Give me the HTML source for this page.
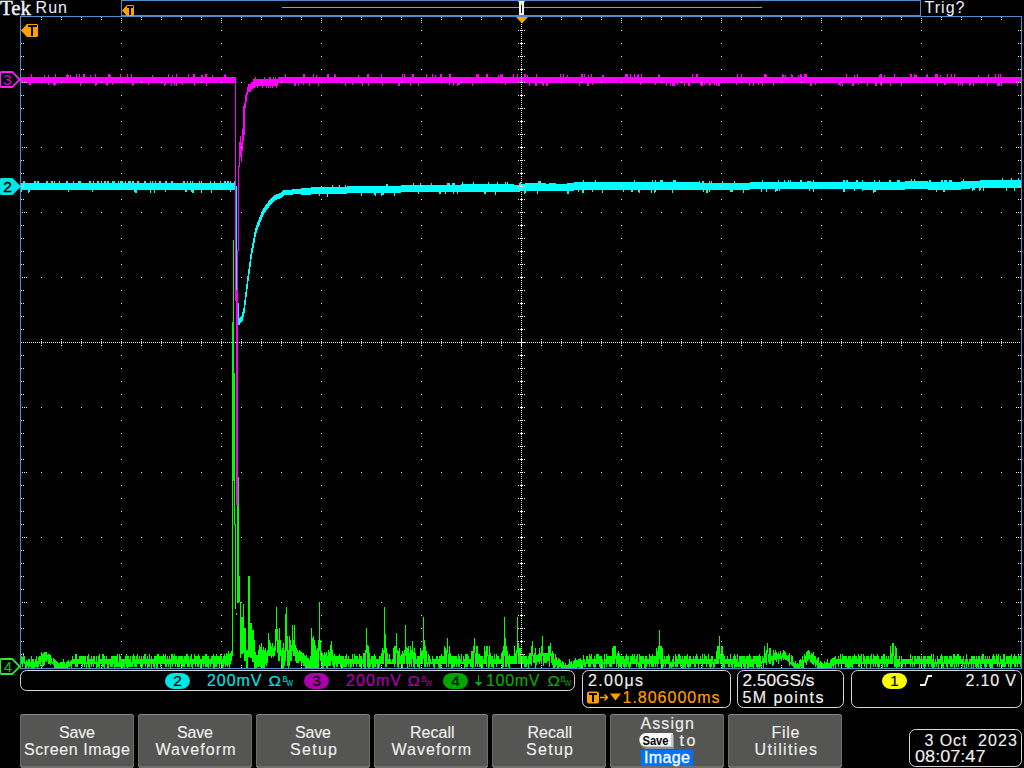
<!DOCTYPE html>
<html><head><meta charset="utf-8">
<style>
html,body{margin:0;padding:0;background:#000;width:1024px;height:768px;overflow:hidden}
svg{position:absolute;left:0;top:0}
text{font-family:"Liberation Sans",sans-serif}
.s{font-family:"Liberation Serif",serif}
</style></head><body>
<svg width="1024" height="768" viewBox="0 0 1024 768">
<rect width="1024" height="768" fill="#000"/>
<g shape-rendering="crispEdges">
<path fill="#508cc8" d="M121 0h800v1h-800zM121 0h1v16h-1zM920 0h1v16h-1zM121 15h800v1h-800z"/>
<rect x="282" y="7" width="480" height="1" fill="#00dcdc"/>
<path fill="#508cc8" d="M20 16h1002v1h-1002zM20 668h1002v1h-1002zM20 16h1v653h-1zM1021 16h1v653h-1z"/>
<path fill="#00ff00" d="M21 656h1v8h-1zM22 657h1v10h-1zM23 653h1v10h-1zM24 656h1v8h-1zM25 662h1v6h-1zM26 660h1v8h-1zM27 661h1v5h-1zM28 659h1v9h-1zM29 659h1v8h-1zM30 662h1v5h-1zM31 656h1v12h-1zM32 659h1v9h-1zM33 659h1v9h-1zM34 662h1v6h-1zM35 659h1v8h-1zM36 656h1v11h-1zM37 661h1v7h-1zM38 657h1v10h-1zM39 656h1v8h-1zM40 656h1v10h-1zM41 652h1v10h-1zM42 654h1v13h-1zM43 653h1v13h-1zM44 652h1v13h-1zM45 652h1v9h-1zM46 652h1v10h-1zM47 655h1v5h-1zM48 654h1v10h-1zM49 654h1v10h-1zM50 655h1v10h-1zM51 658h1v5h-1zM52 662h1v2h-1zM53 658h1v7h-1zM54 659h1v9h-1zM55 660h1v8h-1zM56 661h1v7h-1zM57 662h1v6h-1zM58 663h1v5h-1zM59 663h1v5h-1zM60 662h1v6h-1zM61 662h1v6h-1zM62 662h1v6h-1zM63 659h1v9h-1zM64 662h1v6h-1zM65 664h1v4h-1zM66 662h1v6h-1zM67 661h1v7h-1zM68 660h1v7h-1zM69 662h1v5h-1zM70 661h1v5h-1zM71 660h1v8h-1zM72 656h1v8h-1zM73 659h1v5h-1zM74 659h1v5h-1zM75 654h1v13h-1zM76 654h1v13h-1zM77 659h1v8h-1zM78 659h1v5h-1zM79 656h1v8h-1zM80 656h1v8h-1zM81 656h1v8h-1zM82 656h1v11h-1zM83 656h1v8h-1zM84 656h1v11h-1zM85 656h1v8h-1zM86 662h1v6h-1zM87 656h1v8h-1zM88 654h1v13h-1zM89 659h1v9h-1zM90 659h1v5h-1zM91 656h1v11h-1zM92 659h1v5h-1zM93 656h1v11h-1zM94 656h1v8h-1zM95 662h1v2h-1zM96 656h1v12h-1zM97 662h1v5h-1zM98 656h1v11h-1zM99 654h1v14h-1zM100 659h1v5h-1zM101 659h1v5h-1zM102 654h1v13h-1zM103 654h1v13h-1zM104 656h1v12h-1zM105 659h1v5h-1zM106 656h1v8h-1zM107 659h1v9h-1zM108 659h1v9h-1zM109 659h1v5h-1zM110 659h1v8h-1zM111 656h1v11h-1zM112 656h1v11h-1zM113 656h1v8h-1zM114 656h1v12h-1zM115 656h1v11h-1zM116 656h1v11h-1zM117 654h1v13h-1zM118 662h1v5h-1zM119 654h1v13h-1zM120 656h1v11h-1zM121 659h1v8h-1zM122 659h1v9h-1zM123 659h1v8h-1zM124 659h1v9h-1zM125 656h1v8h-1zM126 654h1v13h-1zM127 656h1v12h-1zM128 656h1v11h-1zM129 659h1v8h-1zM130 656h1v11h-1zM131 662h1v5h-1zM132 656h1v11h-1zM133 654h1v10h-1zM134 656h1v11h-1zM135 659h1v8h-1zM136 656h1v11h-1zM137 654h1v10h-1zM138 659h1v5h-1zM139 656h1v8h-1zM140 659h1v8h-1zM141 656h1v12h-1zM142 659h1v8h-1zM143 656h1v8h-1zM144 654h1v10h-1zM145 654h1v13h-1zM146 659h1v5h-1zM147 656h1v12h-1zM148 659h1v8h-1zM149 654h1v13h-1zM150 659h1v5h-1zM151 656h1v12h-1zM152 659h1v5h-1zM153 659h1v8h-1zM154 656h1v12h-1zM155 656h1v8h-1zM156 656h1v12h-1zM157 654h1v14h-1zM158 654h1v10h-1zM159 656h1v8h-1zM160 656h1v11h-1zM161 656h1v8h-1zM162 656h1v8h-1zM163 654h1v10h-1zM164 656h1v8h-1zM165 654h1v13h-1zM166 659h1v8h-1zM167 656h1v8h-1zM168 659h1v8h-1zM169 656h1v8h-1zM170 659h1v9h-1zM171 654h1v10h-1zM172 654h1v13h-1zM173 656h1v8h-1zM174 654h1v10h-1zM175 656h1v11h-1zM176 656h1v8h-1zM177 659h1v8h-1zM178 656h1v11h-1zM179 656h1v11h-1zM180 656h1v8h-1zM181 656h1v11h-1zM182 656h1v11h-1zM183 659h1v8h-1zM184 656h1v11h-1zM185 656h1v8h-1zM186 654h1v10h-1zM187 654h1v13h-1zM188 656h1v11h-1zM189 659h1v8h-1zM190 656h1v8h-1zM191 654h1v13h-1zM192 659h1v9h-1zM193 659h1v5h-1zM194 654h1v10h-1zM195 656h1v11h-1zM196 656h1v8h-1zM197 656h1v11h-1zM198 654h1v13h-1zM199 656h1v8h-1zM200 659h1v9h-1zM201 659h1v9h-1zM202 656h1v8h-1zM203 656h1v11h-1zM204 656h1v8h-1zM205 654h1v13h-1zM206 654h1v13h-1zM207 656h1v11h-1zM208 656h1v12h-1zM209 659h1v5h-1zM210 659h1v8h-1zM211 656h1v8h-1zM212 656h1v8h-1zM213 654h1v14h-1zM214 656h1v12h-1zM215 656h1v11h-1zM216 654h1v13h-1zM217 656h1v8h-1zM218 656h1v8h-1zM219 656h1v12h-1zM220 654h1v10h-1zM221 656h1v11h-1zM222 659h1v9h-1zM223 656h1v11h-1zM224 654h1v10h-1zM225 656h1v11h-1zM226 653h1v12h-1zM227 654h1v13h-1zM228 651h1v14h-1zM229 654h1v14h-1zM230 653h1v11h-1zM231 651h1v10h-1zM232 322h1v334h-1zM233 240h1v241h-1zM234 373h1v152h-1zM235 524h1v85h-1zM236 613h1v2h-1zM237 477h1v126h-1zM238 477h1v126h-1zM239 576h1v26h-1zM240 602h1v56h-1zM241 617h1v37h-1zM242 617h1v37h-1zM243 604h1v49h-1zM244 628h1v33h-1zM245 628h1v33h-1zM246 650h1v18h-1zM247 650h1v18h-1zM248 576h1v81h-1zM249 576h1v81h-1zM250 623h1v35h-1zM251 623h1v35h-1zM252 630h1v32h-1zM253 630h1v32h-1zM254 640h1v28h-1zM255 652h1v16h-1zM256 655h1v13h-1zM257 655h1v12h-1zM258 650h1v17h-1zM259 645h1v21h-1zM260 647h1v20h-1zM261 643h1v24h-1zM262 650h1v18h-1zM263 647h1v21h-1zM264 650h1v18h-1zM265 648h1v16h-1zM266 652h1v14h-1zM267 650h1v13h-1zM268 633h1v23h-1zM269 640h1v16h-1zM270 643h1v13h-1zM271 646h1v12h-1zM272 643h1v13h-1zM273 648h1v9h-1zM274 646h1v10h-1zM275 629h1v22h-1zM276 607h1v34h-1zM277 629h1v24h-1zM278 640h1v21h-1zM279 628h1v33h-1zM280 640h1v16h-1zM281 650h1v18h-1zM282 648h1v20h-1zM283 643h1v25h-1zM284 650h1v16h-1zM285 614h1v47h-1zM286 607h1v44h-1zM287 636h1v30h-1zM288 650h1v18h-1zM289 636h1v30h-1zM290 640h1v21h-1zM291 645h1v16h-1zM292 625h1v26h-1zM293 640h1v16h-1zM294 625h1v31h-1zM295 645h1v16h-1zM296 648h1v15h-1zM297 650h1v13h-1zM298 652h1v11h-1zM299 650h1v11h-1zM300 651h1v10h-1zM301 652h1v13h-1zM302 653h1v10h-1zM303 653h1v13h-1zM304 655h1v11h-1zM305 656h1v12h-1zM306 655h1v13h-1zM307 658h1v10h-1zM308 658h1v10h-1zM309 660h1v8h-1zM310 656h1v12h-1zM311 628h1v40h-1zM312 638h1v30h-1zM313 636h1v32h-1zM314 640h1v28h-1zM315 645h1v23h-1zM316 650h1v18h-1zM317 648h1v20h-1zM318 640h1v28h-1zM319 602h1v49h-1zM320 640h1v21h-1zM321 651h1v15h-1zM322 653h1v15h-1zM323 655h1v13h-1zM324 652h1v14h-1zM325 654h1v12h-1zM326 652h1v16h-1zM327 656h1v12h-1zM328 650h1v16h-1zM329 652h1v14h-1zM330 645h1v21h-1zM331 641h1v20h-1zM332 650h1v15h-1zM333 656h1v11h-1zM334 654h1v14h-1zM335 656h1v8h-1zM336 656h1v11h-1zM337 656h1v11h-1zM338 656h1v8h-1zM339 654h1v10h-1zM340 656h1v11h-1zM341 656h1v11h-1zM342 656h1v12h-1zM343 656h1v11h-1zM344 659h1v8h-1zM345 656h1v11h-1zM346 654h1v13h-1zM347 659h1v5h-1zM348 656h1v11h-1zM349 659h1v5h-1zM350 659h1v9h-1zM351 659h1v8h-1zM352 654h1v10h-1zM353 659h1v8h-1zM354 654h1v10h-1zM355 656h1v8h-1zM356 656h1v11h-1zM357 656h1v8h-1zM358 659h1v5h-1zM359 654h1v13h-1zM360 656h1v11h-1zM361 656h1v11h-1zM362 659h1v5h-1zM363 653h1v14h-1zM364 653h1v15h-1zM365 650h1v18h-1zM366 628h1v25h-1zM367 645h1v22h-1zM368 646h1v22h-1zM369 653h1v15h-1zM370 659h1v8h-1zM371 656h1v8h-1zM372 656h1v12h-1zM373 656h1v12h-1zM374 654h1v13h-1zM375 656h1v11h-1zM376 659h1v5h-1zM377 659h1v9h-1zM378 659h1v9h-1zM379 656h1v11h-1zM380 656h1v8h-1zM381 653h1v11h-1zM382 648h1v16h-1zM383 650h1v14h-1zM384 607h1v46h-1zM385 634h1v33h-1zM386 648h1v19h-1zM387 653h1v11h-1zM388 659h1v5h-1zM389 654h1v10h-1zM390 659h1v5h-1zM391 662h1v2h-1zM392 659h1v5h-1zM393 648h1v16h-1zM394 646h1v21h-1zM395 646h1v18h-1zM396 633h1v20h-1zM397 650h1v17h-1zM398 651h1v17h-1zM399 648h1v16h-1zM400 656h1v8h-1zM401 654h1v13h-1zM402 651h1v17h-1zM403 653h1v11h-1zM404 650h1v14h-1zM405 625h1v31h-1zM406 647h1v17h-1zM407 648h1v20h-1zM408 646h1v18h-1zM409 653h1v14h-1zM410 646h1v18h-1zM411 650h1v17h-1zM412 641h1v18h-1zM413 652h1v15h-1zM414 648h1v20h-1zM415 653h1v11h-1zM416 659h1v5h-1zM417 656h1v11h-1zM418 656h1v11h-1zM419 656h1v12h-1zM420 648h1v16h-1zM421 651h1v13h-1zM422 650h1v14h-1zM423 617h1v42h-1zM424 640h1v27h-1zM425 646h1v21h-1zM426 651h1v13h-1zM427 662h1v5h-1zM428 654h1v10h-1zM429 656h1v11h-1zM430 659h1v5h-1zM431 662h1v2h-1zM432 656h1v8h-1zM433 659h1v8h-1zM434 659h1v9h-1zM435 659h1v5h-1zM436 656h1v8h-1zM437 656h1v8h-1zM438 659h1v8h-1zM439 656h1v12h-1zM440 656h1v12h-1zM441 654h1v10h-1zM442 656h1v8h-1zM443 656h1v8h-1zM444 646h1v18h-1zM445 648h1v16h-1zM446 650h1v17h-1zM447 638h1v15h-1zM448 654h1v13h-1zM449 646h1v18h-1zM450 653h1v11h-1zM451 656h1v12h-1zM452 656h1v12h-1zM453 656h1v11h-1zM454 656h1v11h-1zM455 656h1v8h-1zM456 656h1v11h-1zM457 659h1v5h-1zM458 654h1v13h-1zM459 656h1v11h-1zM460 659h1v5h-1zM461 654h1v10h-1zM462 662h1v2h-1zM463 656h1v8h-1zM464 659h1v9h-1zM465 654h1v13h-1zM466 654h1v13h-1zM467 654h1v13h-1zM468 656h1v8h-1zM469 659h1v5h-1zM470 659h1v8h-1zM471 651h1v16h-1zM472 651h1v17h-1zM473 646h1v21h-1zM474 638h1v15h-1zM475 653h1v14h-1zM476 646h1v18h-1zM477 646h1v21h-1zM478 654h1v10h-1zM479 654h1v13h-1zM480 656h1v11h-1zM481 656h1v11h-1zM482 656h1v12h-1zM483 659h1v5h-1zM484 646h1v18h-1zM485 651h1v13h-1zM486 646h1v21h-1zM487 646h1v10h-1zM488 655h1v13h-1zM489 646h1v21h-1zM490 653h1v11h-1zM491 656h1v11h-1zM492 656h1v11h-1zM493 659h1v9h-1zM494 654h1v10h-1zM495 659h1v5h-1zM496 654h1v13h-1zM497 656h1v8h-1zM498 656h1v8h-1zM499 659h1v5h-1zM500 659h1v5h-1zM501 653h1v11h-1zM502 651h1v17h-1zM503 646h1v21h-1zM504 617h1v39h-1zM505 638h1v29h-1zM506 646h1v21h-1zM507 651h1v13h-1zM508 656h1v11h-1zM509 654h1v14h-1zM510 656h1v8h-1zM511 656h1v8h-1zM512 656h1v8h-1zM513 656h1v8h-1zM514 646h1v18h-1zM515 653h1v11h-1zM516 650h1v14h-1zM517 617h1v36h-1zM518 643h1v21h-1zM519 648h1v16h-1zM520 648h1v16h-1zM521 656h1v8h-1zM522 656h1v8h-1zM523 654h1v10h-1zM524 656h1v11h-1zM525 656h1v11h-1zM526 656h1v11h-1zM527 659h1v5h-1zM528 656h1v12h-1zM529 653h1v11h-1zM530 653h1v11h-1zM531 646h1v20h-1zM532 641h1v15h-1zM533 655h1v8h-1zM534 653h1v10h-1zM535 648h1v20h-1zM536 655h1v10h-1zM537 655h1v7h-1zM538 654h1v8h-1zM539 648h1v16h-1zM540 653h1v8h-1zM541 646h1v18h-1zM542 636h1v20h-1zM543 653h1v13h-1zM544 653h1v10h-1zM545 653h1v10h-1zM546 653h1v10h-1zM547 653h1v8h-1zM548 646h1v15h-1zM549 646h1v21h-1zM550 643h1v13h-1zM551 653h1v10h-1zM552 651h1v14h-1zM553 653h1v15h-1zM554 659h1v9h-1zM555 654h1v13h-1zM556 657h1v8h-1zM557 660h1v8h-1zM558 658h1v10h-1zM559 659h1v8h-1zM560 660h1v7h-1zM561 663h1v5h-1zM562 661h1v7h-1zM563 662h1v6h-1zM564 665h1v3h-1zM565 663h1v5h-1zM566 665h1v3h-1zM567 665h1v3h-1zM568 664h1v4h-1zM569 659h1v9h-1zM570 662h1v6h-1zM571 661h1v7h-1zM572 664h1v4h-1zM573 661h1v7h-1zM574 660h1v8h-1zM575 658h1v10h-1zM576 660h1v8h-1zM577 660h1v7h-1zM578 659h1v8h-1zM579 659h1v9h-1zM580 658h1v10h-1zM581 660h1v8h-1zM582 660h1v8h-1zM583 655h1v10h-1zM584 659h1v8h-1zM585 662h1v5h-1zM586 656h1v8h-1zM587 656h1v8h-1zM588 659h1v8h-1zM589 654h1v13h-1zM590 656h1v11h-1zM591 654h1v10h-1zM592 659h1v5h-1zM593 659h1v8h-1zM594 656h1v12h-1zM595 659h1v8h-1zM596 654h1v10h-1zM597 654h1v10h-1zM598 654h1v10h-1zM599 656h1v11h-1zM600 656h1v12h-1zM601 656h1v11h-1zM602 659h1v9h-1zM603 662h1v2h-1zM604 654h1v14h-1zM605 659h1v5h-1zM606 654h1v13h-1zM607 656h1v8h-1zM608 656h1v8h-1zM609 656h1v11h-1zM610 656h1v11h-1zM611 656h1v11h-1zM612 648h1v16h-1zM613 646h1v18h-1zM614 646h1v18h-1zM615 646h1v13h-1zM616 656h1v11h-1zM617 653h1v11h-1zM618 651h1v17h-1zM619 654h1v13h-1zM620 656h1v11h-1zM621 656h1v12h-1zM622 656h1v8h-1zM623 656h1v11h-1zM624 659h1v9h-1zM625 656h1v11h-1zM626 654h1v13h-1zM627 656h1v8h-1zM628 656h1v11h-1zM629 662h1v6h-1zM630 656h1v11h-1zM631 656h1v8h-1zM632 654h1v10h-1zM633 656h1v8h-1zM634 654h1v10h-1zM635 659h1v5h-1zM636 656h1v11h-1zM637 654h1v10h-1zM638 662h1v5h-1zM639 654h1v14h-1zM640 656h1v11h-1zM641 656h1v11h-1zM642 656h1v8h-1zM643 656h1v8h-1zM644 659h1v9h-1zM645 656h1v12h-1zM646 656h1v11h-1zM647 659h1v5h-1zM648 659h1v5h-1zM649 654h1v13h-1zM650 656h1v8h-1zM651 656h1v11h-1zM652 654h1v13h-1zM653 656h1v11h-1zM654 656h1v8h-1zM655 656h1v11h-1zM656 648h1v16h-1zM657 651h1v16h-1zM658 646h1v18h-1zM659 630h1v29h-1zM660 646h1v18h-1zM661 646h1v21h-1zM662 648h1v20h-1zM663 659h1v8h-1zM664 656h1v8h-1zM665 659h1v8h-1zM666 656h1v8h-1zM667 656h1v8h-1zM668 654h1v10h-1zM669 656h1v12h-1zM670 662h1v5h-1zM671 662h1v6h-1zM672 659h1v8h-1zM673 656h1v11h-1zM674 662h1v2h-1zM675 654h1v13h-1zM676 656h1v11h-1zM677 659h1v8h-1zM678 654h1v10h-1zM679 654h1v10h-1zM680 656h1v11h-1zM681 659h1v5h-1zM682 656h1v12h-1zM683 659h1v9h-1zM684 656h1v11h-1zM685 656h1v12h-1zM686 656h1v8h-1zM687 654h1v13h-1zM688 659h1v9h-1zM689 656h1v11h-1zM690 656h1v11h-1zM691 659h1v5h-1zM692 659h1v5h-1zM693 656h1v8h-1zM694 659h1v8h-1zM695 656h1v11h-1zM696 654h1v10h-1zM697 656h1v8h-1zM698 659h1v9h-1zM699 659h1v5h-1zM700 656h1v8h-1zM701 659h1v5h-1zM702 654h1v13h-1zM703 659h1v5h-1zM704 654h1v10h-1zM705 656h1v8h-1zM706 656h1v11h-1zM707 659h1v5h-1zM708 654h1v10h-1zM709 659h1v8h-1zM710 659h1v9h-1zM711 656h1v11h-1zM712 656h1v8h-1zM713 662h1v6h-1zM714 659h1v8h-1zM715 659h1v5h-1zM716 651h1v13h-1zM717 646h1v18h-1zM718 646h1v18h-1zM719 636h1v23h-1zM720 654h1v10h-1zM721 646h1v18h-1zM722 646h1v22h-1zM723 654h1v13h-1zM724 656h1v12h-1zM725 659h1v5h-1zM726 659h1v5h-1zM727 656h1v8h-1zM728 659h1v8h-1zM729 659h1v8h-1zM730 654h1v10h-1zM731 659h1v8h-1zM732 659h1v9h-1zM733 656h1v8h-1zM734 654h1v14h-1zM735 656h1v11h-1zM736 659h1v8h-1zM737 654h1v13h-1zM738 662h1v5h-1zM739 656h1v11h-1zM740 656h1v11h-1zM741 656h1v12h-1zM742 656h1v8h-1zM743 656h1v11h-1zM744 656h1v12h-1zM745 659h1v9h-1zM746 656h1v8h-1zM747 656h1v12h-1zM748 656h1v12h-1zM749 654h1v13h-1zM750 656h1v11h-1zM751 659h1v8h-1zM752 659h1v8h-1zM753 656h1v12h-1zM754 656h1v8h-1zM755 656h1v8h-1zM756 656h1v11h-1zM757 656h1v12h-1zM758 656h1v11h-1zM759 654h1v14h-1zM760 656h1v11h-1zM761 661h1v3h-1zM762 656h1v7h-1zM763 658h1v10h-1zM764 646h1v17h-1zM765 653h1v10h-1zM766 650h1v15h-1zM767 643h1v10h-1zM768 654h1v8h-1zM769 648h1v16h-1zM770 648h1v16h-1zM771 656h1v5h-1zM772 656h1v10h-1zM773 650h1v15h-1zM774 653h1v7h-1zM775 650h1v10h-1zM776 652h1v10h-1zM777 654h1v5h-1zM778 652h1v12h-1zM779 654h1v5h-1zM780 651h1v8h-1zM781 656h1v5h-1zM782 653h1v5h-1zM783 650h1v10h-1zM784 651h1v8h-1zM785 652h1v8h-1zM786 655h1v5h-1zM787 656h1v5h-1zM788 655h1v7h-1zM789 653h1v13h-1zM790 662h1v2h-1zM791 655h1v10h-1zM792 656h1v10h-1zM793 662h1v5h-1zM794 663h1v5h-1zM795 661h1v7h-1zM796 664h1v4h-1zM797 663h1v5h-1zM798 664h1v4h-1zM799 660h1v8h-1zM800 659h1v8h-1zM801 660h1v5h-1zM802 656h1v12h-1zM803 660h1v8h-1zM804 654h1v8h-1zM805 656h1v7h-1zM806 652h1v13h-1zM807 651h1v10h-1zM808 650h1v10h-1zM809 651h1v8h-1zM810 655h1v7h-1zM811 653h1v10h-1zM812 654h1v10h-1zM813 652h1v13h-1zM814 656h1v7h-1zM815 656h1v11h-1zM816 660h1v5h-1zM817 658h1v10h-1zM818 657h1v11h-1zM819 663h1v5h-1zM820 661h1v7h-1zM821 662h1v6h-1zM822 663h1v5h-1zM823 664h1v4h-1zM824 661h1v7h-1zM825 663h1v5h-1zM826 662h1v6h-1zM827 659h1v9h-1zM828 663h1v5h-1zM829 663h1v5h-1zM830 660h1v8h-1zM831 659h1v9h-1zM832 658h1v8h-1zM833 658h1v10h-1zM834 657h1v8h-1zM835 656h1v12h-1zM836 659h1v5h-1zM837 659h1v5h-1zM838 656h1v11h-1zM839 659h1v5h-1zM840 654h1v10h-1zM841 659h1v8h-1zM842 654h1v10h-1zM843 656h1v8h-1zM844 656h1v8h-1zM845 656h1v11h-1zM846 656h1v11h-1zM847 659h1v9h-1zM848 656h1v12h-1zM849 656h1v12h-1zM850 656h1v11h-1zM851 659h1v8h-1zM852 656h1v12h-1zM853 656h1v8h-1zM854 654h1v10h-1zM855 656h1v8h-1zM856 656h1v8h-1zM857 659h1v5h-1zM858 654h1v13h-1zM859 656h1v11h-1zM860 656h1v8h-1zM861 654h1v13h-1zM862 662h1v2h-1zM863 654h1v10h-1zM864 656h1v11h-1zM865 659h1v5h-1zM866 656h1v12h-1zM867 656h1v8h-1zM868 656h1v8h-1zM869 659h1v5h-1zM870 656h1v12h-1zM871 654h1v10h-1zM872 659h1v5h-1zM873 654h1v13h-1zM874 656h1v8h-1zM875 656h1v11h-1zM876 656h1v8h-1zM877 654h1v13h-1zM878 656h1v12h-1zM879 659h1v8h-1zM880 659h1v5h-1zM881 656h1v8h-1zM882 656h1v12h-1zM883 654h1v10h-1zM884 654h1v13h-1zM885 659h1v5h-1zM886 656h1v11h-1zM887 659h1v8h-1zM888 656h1v8h-1zM889 659h1v5h-1zM890 646h1v18h-1zM891 653h1v11h-1zM892 643h1v21h-1zM893 643h1v13h-1zM894 656h1v11h-1zM895 646h1v21h-1zM896 648h1v20h-1zM897 659h1v8h-1zM898 659h1v8h-1zM899 656h1v11h-1zM900 662h1v2h-1zM901 656h1v11h-1zM902 659h1v8h-1zM903 659h1v5h-1zM904 659h1v5h-1zM905 659h1v8h-1zM906 659h1v5h-1zM907 659h1v5h-1zM908 659h1v5h-1zM909 659h1v5h-1zM910 654h1v13h-1zM911 659h1v5h-1zM912 656h1v11h-1zM913 662h1v2h-1zM914 656h1v11h-1zM915 656h1v8h-1zM916 659h1v5h-1zM917 656h1v8h-1zM918 656h1v8h-1zM919 656h1v12h-1zM920 659h1v5h-1zM921 656h1v12h-1zM922 659h1v5h-1zM923 656h1v11h-1zM924 656h1v12h-1zM925 656h1v11h-1zM926 659h1v5h-1zM927 656h1v8h-1zM928 656h1v11h-1zM929 656h1v8h-1zM930 656h1v8h-1zM931 654h1v13h-1zM932 659h1v9h-1zM933 654h1v14h-1zM934 662h1v5h-1zM935 659h1v5h-1zM936 662h1v5h-1zM937 656h1v8h-1zM938 659h1v9h-1zM939 659h1v5h-1zM940 656h1v8h-1zM941 654h1v13h-1zM942 656h1v11h-1zM943 662h1v6h-1zM944 656h1v8h-1zM945 656h1v8h-1zM946 656h1v11h-1zM947 656h1v12h-1zM948 659h1v5h-1zM949 656h1v8h-1zM950 656h1v11h-1zM951 656h1v11h-1zM952 659h1v8h-1zM953 654h1v10h-1zM954 654h1v14h-1zM955 656h1v8h-1zM956 656h1v11h-1zM957 654h1v10h-1zM958 654h1v13h-1zM959 656h1v8h-1zM960 656h1v8h-1zM961 659h1v5h-1zM962 659h1v8h-1zM963 656h1v8h-1zM964 662h1v6h-1zM965 659h1v5h-1zM966 654h1v14h-1zM967 659h1v5h-1zM968 662h1v5h-1zM969 659h1v5h-1zM970 659h1v5h-1zM971 656h1v12h-1zM972 656h1v8h-1zM973 656h1v12h-1zM974 656h1v8h-1zM975 659h1v8h-1zM976 656h1v12h-1zM977 659h1v8h-1zM978 656h1v12h-1zM979 656h1v8h-1zM980 659h1v9h-1zM981 656h1v8h-1zM982 654h1v10h-1zM983 654h1v10h-1zM984 659h1v8h-1zM985 656h1v12h-1zM986 659h1v8h-1zM987 656h1v8h-1zM988 659h1v5h-1zM989 656h1v11h-1zM990 659h1v9h-1zM991 659h1v9h-1zM992 656h1v12h-1zM993 654h1v10h-1zM994 656h1v8h-1zM995 659h1v5h-1zM996 654h1v10h-1zM997 656h1v11h-1zM998 654h1v10h-1zM999 662h1v5h-1zM1000 656h1v8h-1zM1001 659h1v8h-1zM1002 659h1v8h-1zM1003 654h1v13h-1zM1004 654h1v13h-1zM1005 662h1v5h-1zM1006 656h1v8h-1zM1007 656h1v8h-1zM1008 656h1v11h-1zM1009 656h1v8h-1zM1010 656h1v12h-1zM1011 654h1v13h-1zM1012 659h1v5h-1zM1013 656h1v8h-1zM1014 654h1v13h-1zM1015 656h1v11h-1zM1016 656h1v8h-1zM1017 659h1v8h-1zM1018 654h1v10h-1zM1019 656h1v8h-1zM1020 656h1v11h-1z"/>
<path fill="#00ffff" d="M21 183h1v9h-1zM22 183h1v7h-1zM23 181h1v9h-1zM24 181h1v9h-1zM25 183h1v7h-1zM26 183h1v7h-1zM27 183h1v7h-1zM28 183h1v10h-1zM29 183h1v9h-1zM30 183h1v7h-1zM31 183h1v7h-1zM32 183h1v7h-1zM33 183h1v7h-1zM34 181h1v9h-1zM35 181h1v9h-1zM36 183h1v7h-1zM37 181h1v9h-1zM38 181h1v9h-1zM39 183h1v7h-1zM40 183h1v7h-1zM41 183h1v7h-1zM42 183h1v7h-1zM43 183h1v7h-1zM44 183h1v7h-1zM45 183h1v7h-1zM46 181h1v9h-1zM47 181h1v9h-1zM48 183h1v7h-1zM49 183h1v7h-1zM50 183h1v7h-1zM51 181h1v9h-1zM52 181h1v9h-1zM53 183h1v7h-1zM54 181h1v9h-1zM55 183h1v7h-1zM56 183h1v7h-1zM57 183h1v7h-1zM58 183h1v7h-1zM59 181h1v9h-1zM60 183h1v7h-1zM61 183h1v7h-1zM62 183h1v7h-1zM63 183h1v7h-1zM64 183h1v7h-1zM65 183h1v7h-1zM66 181h1v9h-1zM67 181h1v9h-1zM68 183h1v9h-1zM69 183h1v7h-1zM70 183h1v7h-1zM71 183h1v7h-1zM72 183h1v7h-1zM73 181h1v9h-1zM74 183h1v7h-1zM75 183h1v7h-1zM76 183h1v7h-1zM77 183h1v7h-1zM78 181h1v9h-1zM79 181h1v9h-1zM80 181h1v9h-1zM81 183h1v7h-1zM82 183h1v7h-1zM83 183h1v7h-1zM84 183h1v7h-1zM85 183h1v7h-1zM86 183h1v7h-1zM87 183h1v7h-1zM88 183h1v7h-1zM89 181h1v9h-1zM90 181h1v9h-1zM91 183h1v7h-1zM92 183h1v9h-1zM93 181h1v9h-1zM94 183h1v7h-1zM95 183h1v7h-1zM96 183h1v7h-1zM97 181h1v9h-1zM98 181h1v9h-1zM99 183h1v7h-1zM100 183h1v7h-1zM101 181h1v9h-1zM102 183h1v7h-1zM103 183h1v7h-1zM104 181h1v9h-1zM105 181h1v9h-1zM106 183h1v7h-1zM107 181h1v9h-1zM108 181h1v9h-1zM109 183h1v7h-1zM110 183h1v7h-1zM111 183h1v7h-1zM112 181h1v9h-1zM113 181h1v9h-1zM114 181h1v9h-1zM115 183h1v7h-1zM116 183h1v7h-1zM117 183h1v7h-1zM118 181h1v9h-1zM119 183h1v7h-1zM120 181h1v9h-1zM121 181h1v9h-1zM122 181h1v9h-1zM123 183h1v7h-1zM124 183h1v7h-1zM125 181h1v9h-1zM126 183h1v7h-1zM127 183h1v7h-1zM128 181h1v9h-1zM129 181h1v9h-1zM130 181h1v9h-1zM131 183h1v7h-1zM132 181h1v9h-1zM133 181h1v9h-1zM134 183h1v9h-1zM135 183h1v10h-1zM136 183h1v10h-1zM137 181h1v9h-1zM138 181h1v9h-1zM139 183h1v7h-1zM140 183h1v7h-1zM141 183h1v7h-1zM142 183h1v7h-1zM143 183h1v7h-1zM144 181h1v9h-1zM145 181h1v9h-1zM146 183h1v7h-1zM147 183h1v7h-1zM148 183h1v7h-1zM149 183h1v7h-1zM150 181h1v12h-1zM151 183h1v7h-1zM152 181h1v9h-1zM153 183h1v7h-1zM154 183h1v10h-1zM155 181h1v9h-1zM156 183h1v7h-1zM157 183h1v7h-1zM158 183h1v7h-1zM159 181h1v9h-1zM160 181h1v9h-1zM161 183h1v7h-1zM162 183h1v7h-1zM163 183h1v7h-1zM164 183h1v7h-1zM165 181h1v11h-1zM166 181h1v9h-1zM167 183h1v7h-1zM168 183h1v7h-1zM169 183h1v7h-1zM170 183h1v7h-1zM171 181h1v9h-1zM172 181h1v9h-1zM173 183h1v7h-1zM174 183h1v7h-1zM175 183h1v7h-1zM176 183h1v7h-1zM177 183h1v7h-1zM178 183h1v7h-1zM179 183h1v7h-1zM180 183h1v7h-1zM181 183h1v7h-1zM182 183h1v7h-1zM183 181h1v9h-1zM184 181h1v9h-1zM185 183h1v9h-1zM186 183h1v9h-1zM187 181h1v9h-1zM188 183h1v7h-1zM189 183h1v7h-1zM190 181h1v9h-1zM191 183h1v9h-1zM192 181h1v12h-1zM193 183h1v10h-1zM194 183h1v7h-1zM195 183h1v7h-1zM196 183h1v7h-1zM197 183h1v7h-1zM198 183h1v7h-1zM199 181h1v9h-1zM200 183h1v7h-1zM201 181h1v12h-1zM202 183h1v7h-1zM203 183h1v7h-1zM204 183h1v7h-1zM205 183h1v7h-1zM206 183h1v7h-1zM207 183h1v7h-1zM208 183h1v7h-1zM209 183h1v7h-1zM210 181h1v9h-1zM211 183h1v10h-1zM212 183h1v7h-1zM213 183h1v7h-1zM214 181h1v9h-1zM215 183h1v7h-1zM216 183h1v7h-1zM217 183h1v7h-1zM218 183h1v7h-1zM219 183h1v7h-1zM220 181h1v9h-1zM221 183h1v7h-1zM222 183h1v7h-1zM223 183h1v7h-1zM224 181h1v9h-1zM225 181h1v9h-1zM226 183h1v7h-1zM227 181h1v9h-1zM228 181h1v9h-1zM229 183h1v7h-1zM230 181h1v11h-1zM231 183h1v7h-1zM232 183h1v7h-1zM233 183h1v7h-1zM234 181h1v9h-1zM238 303h1v22h-1zM239 318h1v7h-1zM240 317h1v6h-1zM241 316h1v6h-1zM242 312h1v9h-1zM243 308h1v9h-1zM244 300h1v13h-1zM245 292h1v13h-1zM246 284h1v13h-1zM247 276h1v13h-1zM248 269h1v12h-1zM249 262h1v12h-1zM250 254h1v13h-1zM251 248h1v11h-1zM252 243h1v10h-1zM253 238h1v10h-1zM254 232h1v11h-1zM255 228h1v9h-1zM256 225h1v8h-1zM257 222h1v8h-1zM258 220h1v7h-1zM259 217h1v8h-1zM260 215h1v7h-1zM261 212h1v8h-1zM262 210h1v7h-1zM263 208h1v7h-1zM264 207h1v6h-1zM265 205h1v7h-1zM266 204h1v6h-1zM267 203h1v6h-1zM268 201h1v7h-1zM269 200h1v6h-1zM270 199h1v6h-1zM271 198h1v6h-1zM272 197h1v6h-1zM273 196h1v6h-1zM274 195h1v6h-1zM275 195h1v5h-1zM276 194h1v6h-1zM277 194h1v5h-1zM278 194h1v5h-1zM279 193h1v6h-1zM280 193h1v5h-1zM281 192h1v6h-1zM282 191h1v6h-1zM283 190h1v6h-1zM284 190h1v5h-1zM285 190h1v5h-1zM286 190h1v5h-1zM287 190h1v5h-1zM288 190h1v5h-1zM289 190h1v5h-1zM290 190h1v5h-1zM291 190h1v5h-1zM292 189h1v6h-1zM293 189h1v5h-1zM294 189h1v5h-1zM295 189h1v5h-1zM296 189h1v5h-1zM297 189h1v5h-1zM298 189h1v5h-1zM299 189h1v5h-1zM300 189h1v5h-1zM301 188h1v7h-1zM302 188h1v7h-1zM303 188h1v7h-1zM304 188h1v7h-1zM305 188h1v7h-1zM306 188h1v7h-1zM307 188h1v7h-1zM308 188h1v7h-1zM309 188h1v7h-1zM310 188h1v7h-1zM311 187h1v7h-1zM312 187h1v7h-1zM313 187h1v7h-1zM314 187h1v7h-1zM315 187h1v7h-1zM316 187h1v7h-1zM317 187h1v7h-1zM318 187h1v7h-1zM319 187h1v9h-1zM320 187h1v7h-1zM321 187h1v7h-1zM322 187h1v7h-1zM323 187h1v7h-1zM324 187h1v7h-1zM325 187h1v7h-1zM326 187h1v7h-1zM327 187h1v10h-1zM328 187h1v7h-1zM329 187h1v7h-1zM330 187h1v7h-1zM331 187h1v7h-1zM332 185h1v9h-1zM333 187h1v7h-1zM334 187h1v7h-1zM335 187h1v7h-1zM336 187h1v7h-1zM337 187h1v7h-1zM338 187h1v7h-1zM339 185h1v9h-1zM340 187h1v7h-1zM341 187h1v7h-1zM342 187h1v7h-1zM343 187h1v7h-1zM344 187h1v7h-1zM345 185h1v9h-1zM346 187h1v7h-1zM347 186h1v7h-1zM348 186h1v7h-1zM349 186h1v7h-1zM350 186h1v7h-1zM351 186h1v7h-1zM352 186h1v7h-1zM353 186h1v7h-1zM354 186h1v7h-1zM355 186h1v7h-1zM356 186h1v7h-1zM357 186h1v7h-1zM358 186h1v7h-1zM359 186h1v7h-1zM360 186h1v7h-1zM361 186h1v10h-1zM362 186h1v7h-1zM363 186h1v7h-1zM364 186h1v7h-1zM365 186h1v7h-1zM366 186h1v7h-1zM367 186h1v7h-1zM368 186h1v7h-1zM369 186h1v7h-1zM370 186h1v7h-1zM371 186h1v7h-1zM372 186h1v7h-1zM373 186h1v7h-1zM374 186h1v9h-1zM375 186h1v10h-1zM376 186h1v7h-1zM377 186h1v7h-1zM378 186h1v7h-1zM379 186h1v7h-1zM380 186h1v7h-1zM381 186h1v10h-1zM382 186h1v9h-1zM383 186h1v9h-1zM384 186h1v7h-1zM385 186h1v7h-1zM386 184h1v9h-1zM387 184h1v9h-1zM388 186h1v7h-1zM389 186h1v7h-1zM390 186h1v7h-1zM391 186h1v7h-1zM392 186h1v7h-1zM393 186h1v7h-1zM394 186h1v10h-1zM395 186h1v7h-1zM396 186h1v7h-1zM397 186h1v7h-1zM398 186h1v7h-1zM399 186h1v7h-1zM400 186h1v7h-1zM401 185h1v7h-1zM402 185h1v7h-1zM403 185h1v7h-1zM404 185h1v7h-1zM405 185h1v7h-1zM406 185h1v7h-1zM407 185h1v7h-1zM408 185h1v7h-1zM409 185h1v7h-1zM410 185h1v7h-1zM411 185h1v7h-1zM412 185h1v7h-1zM413 183h1v9h-1zM414 185h1v7h-1zM415 185h1v7h-1zM416 185h1v7h-1zM417 185h1v7h-1zM418 185h1v9h-1zM419 185h1v7h-1zM420 183h1v9h-1zM421 185h1v7h-1zM422 185h1v7h-1zM423 185h1v7h-1zM424 185h1v7h-1zM425 185h1v7h-1zM426 185h1v7h-1zM427 185h1v7h-1zM428 185h1v7h-1zM429 185h1v7h-1zM430 185h1v7h-1zM431 183h1v9h-1zM432 185h1v7h-1zM433 185h1v7h-1zM434 185h1v7h-1zM435 185h1v7h-1zM436 185h1v7h-1zM437 185h1v7h-1zM438 185h1v7h-1zM439 185h1v9h-1zM440 185h1v9h-1zM441 185h1v7h-1zM442 185h1v7h-1zM443 185h1v7h-1zM444 185h1v7h-1zM445 185h1v9h-1zM446 185h1v7h-1zM447 183h1v9h-1zM448 183h1v9h-1zM449 183h1v9h-1zM450 185h1v7h-1zM451 185h1v7h-1zM452 183h1v9h-1zM453 183h1v11h-1zM454 183h1v9h-1zM455 185h1v7h-1zM456 185h1v7h-1zM457 185h1v9h-1zM458 185h1v7h-1zM459 185h1v7h-1zM460 185h1v7h-1zM461 184h1v8h-1zM462 182h1v10h-1zM463 184h1v8h-1zM464 184h1v8h-1zM465 184h1v8h-1zM466 184h1v8h-1zM467 184h1v8h-1zM468 184h1v8h-1zM469 184h1v8h-1zM470 184h1v8h-1zM471 184h1v8h-1zM472 184h1v8h-1zM473 182h1v10h-1zM474 184h1v8h-1zM475 184h1v8h-1zM476 184h1v8h-1zM477 184h1v8h-1zM478 184h1v8h-1zM479 184h1v8h-1zM480 184h1v8h-1zM481 184h1v8h-1zM482 184h1v8h-1zM483 184h1v8h-1zM484 184h1v10h-1zM485 184h1v10h-1zM486 184h1v8h-1zM487 184h1v8h-1zM488 182h1v10h-1zM489 184h1v8h-1zM490 184h1v8h-1zM491 184h1v8h-1zM492 184h1v8h-1zM493 184h1v8h-1zM494 184h1v8h-1zM495 184h1v11h-1zM496 184h1v8h-1zM497 182h1v10h-1zM498 184h1v8h-1zM499 184h1v8h-1zM500 184h1v8h-1zM501 184h1v8h-1zM502 184h1v8h-1zM503 184h1v8h-1zM504 184h1v8h-1zM505 182h1v10h-1zM506 184h1v8h-1zM507 182h1v10h-1zM508 184h1v8h-1zM509 184h1v8h-1zM510 184h1v8h-1zM511 184h1v8h-1zM512 184h1v8h-1zM513 184h1v8h-1zM514 185h1v7h-1zM515 185h1v7h-1zM516 185h1v7h-1zM517 185h1v7h-1zM518 185h1v7h-1zM519 183h1v9h-1zM520 182h1v9h-1zM521 184h1v7h-1zM522 184h1v7h-1zM523 184h1v7h-1zM524 184h1v10h-1zM525 183h1v10h-1zM526 183h1v8h-1zM527 183h1v8h-1zM528 183h1v8h-1zM529 183h1v8h-1zM530 183h1v8h-1zM531 183h1v8h-1zM532 183h1v8h-1zM533 183h1v8h-1zM534 183h1v8h-1zM535 183h1v8h-1zM536 183h1v8h-1zM537 183h1v11h-1zM538 181h1v10h-1zM539 181h1v10h-1zM540 181h1v10h-1zM541 183h1v8h-1zM542 183h1v8h-1zM543 183h1v8h-1zM544 183h1v8h-1zM545 183h1v8h-1zM546 184h1v7h-1zM547 184h1v7h-1zM548 184h1v7h-1zM549 183h1v8h-1zM550 183h1v8h-1zM551 183h1v8h-1zM552 183h1v8h-1zM553 183h1v8h-1zM554 183h1v8h-1zM555 183h1v8h-1zM556 184h1v7h-1zM557 184h1v7h-1zM558 184h1v7h-1zM559 184h1v7h-1zM560 184h1v7h-1zM561 184h1v7h-1zM562 184h1v7h-1zM563 184h1v7h-1zM564 184h1v7h-1zM565 184h1v7h-1zM566 184h1v7h-1zM567 183h1v11h-1zM568 183h1v11h-1zM569 183h1v8h-1zM570 183h1v8h-1zM571 183h1v8h-1zM572 183h1v8h-1zM573 183h1v8h-1zM574 182h1v8h-1zM575 182h1v8h-1zM576 182h1v8h-1zM577 182h1v8h-1zM578 182h1v10h-1zM579 182h1v8h-1zM580 182h1v8h-1zM581 182h1v8h-1zM582 182h1v11h-1zM583 180h1v13h-1zM584 182h1v8h-1zM585 182h1v8h-1zM586 182h1v8h-1zM587 182h1v8h-1zM588 182h1v8h-1zM589 182h1v8h-1zM590 182h1v8h-1zM591 182h1v8h-1zM592 182h1v10h-1zM593 182h1v8h-1zM594 182h1v8h-1zM595 180h1v10h-1zM596 182h1v8h-1zM597 182h1v8h-1zM598 182h1v8h-1zM599 182h1v8h-1zM600 182h1v8h-1zM601 182h1v8h-1zM602 182h1v11h-1zM603 182h1v8h-1zM604 182h1v8h-1zM605 182h1v8h-1zM606 182h1v8h-1zM607 182h1v8h-1zM608 182h1v8h-1zM609 182h1v8h-1zM610 182h1v8h-1zM611 182h1v8h-1zM612 182h1v8h-1zM613 182h1v8h-1zM614 182h1v8h-1zM615 182h1v8h-1zM616 182h1v8h-1zM617 182h1v8h-1zM618 182h1v8h-1zM619 182h1v8h-1zM620 182h1v8h-1zM621 182h1v8h-1zM622 182h1v8h-1zM623 182h1v10h-1zM624 182h1v8h-1zM625 182h1v8h-1zM626 182h1v8h-1zM627 182h1v8h-1zM628 182h1v8h-1zM629 182h1v8h-1zM630 182h1v8h-1zM631 182h1v10h-1zM632 182h1v10h-1zM633 182h1v8h-1zM634 180h1v10h-1zM635 182h1v8h-1zM636 182h1v8h-1zM637 182h1v8h-1zM638 182h1v10h-1zM639 182h1v11h-1zM640 182h1v8h-1zM641 182h1v8h-1zM642 182h1v8h-1zM643 182h1v8h-1zM644 182h1v8h-1zM645 182h1v8h-1zM646 182h1v8h-1zM647 182h1v8h-1zM648 182h1v8h-1zM649 182h1v8h-1zM650 182h1v8h-1zM651 182h1v11h-1zM652 180h1v10h-1zM653 182h1v8h-1zM654 182h1v11h-1zM655 180h1v12h-1zM656 182h1v8h-1zM657 182h1v8h-1zM658 182h1v8h-1zM659 182h1v8h-1zM660 180h1v10h-1zM661 180h1v10h-1zM662 180h1v10h-1zM663 182h1v8h-1zM664 182h1v8h-1zM665 182h1v8h-1zM666 182h1v8h-1zM667 182h1v8h-1zM668 182h1v8h-1zM669 182h1v8h-1zM670 182h1v8h-1zM671 182h1v8h-1zM672 182h1v11h-1zM673 180h1v10h-1zM674 180h1v10h-1zM675 180h1v10h-1zM676 182h1v8h-1zM677 182h1v8h-1zM678 182h1v8h-1zM679 182h1v8h-1zM680 182h1v8h-1zM681 182h1v8h-1zM682 182h1v8h-1zM683 182h1v8h-1zM684 182h1v8h-1zM685 182h1v8h-1zM686 182h1v8h-1zM687 182h1v8h-1zM688 182h1v8h-1zM689 182h1v8h-1zM690 182h1v8h-1zM691 182h1v8h-1zM692 182h1v8h-1zM693 182h1v8h-1zM694 182h1v8h-1zM695 182h1v8h-1zM696 182h1v8h-1zM697 182h1v8h-1zM698 182h1v8h-1zM699 181h1v9h-1zM700 183h1v7h-1zM701 183h1v7h-1zM702 181h1v9h-1zM703 181h1v11h-1zM704 183h1v7h-1zM705 183h1v7h-1zM706 183h1v10h-1zM707 183h1v10h-1zM708 183h1v7h-1zM709 181h1v11h-1zM710 183h1v7h-1zM711 181h1v9h-1zM712 183h1v7h-1zM713 183h1v7h-1zM714 183h1v7h-1zM715 183h1v7h-1zM716 183h1v7h-1zM717 183h1v7h-1zM718 183h1v7h-1zM719 183h1v7h-1zM720 183h1v7h-1zM721 183h1v7h-1zM722 181h1v9h-1zM723 183h1v7h-1zM724 183h1v7h-1zM725 183h1v7h-1zM726 183h1v7h-1zM727 183h1v7h-1zM728 183h1v7h-1zM729 183h1v7h-1zM730 183h1v9h-1zM731 183h1v9h-1zM732 183h1v9h-1zM733 183h1v7h-1zM734 181h1v9h-1zM735 183h1v7h-1zM736 183h1v7h-1zM737 183h1v7h-1zM738 183h1v7h-1zM739 183h1v7h-1zM740 183h1v7h-1zM741 183h1v7h-1zM742 183h1v7h-1zM743 183h1v10h-1zM744 183h1v7h-1zM745 183h1v7h-1zM746 183h1v7h-1zM747 183h1v7h-1zM748 183h1v7h-1zM749 183h1v7h-1zM750 182h1v7h-1zM751 182h1v7h-1zM752 182h1v7h-1zM753 182h1v7h-1zM754 182h1v7h-1zM755 182h1v7h-1zM756 182h1v7h-1zM757 182h1v7h-1zM758 182h1v7h-1zM759 182h1v7h-1zM760 182h1v7h-1zM761 182h1v10h-1zM762 180h1v9h-1zM763 182h1v7h-1zM764 182h1v7h-1zM765 182h1v7h-1zM766 182h1v10h-1zM767 182h1v7h-1zM768 182h1v7h-1zM769 182h1v7h-1zM770 182h1v7h-1zM771 182h1v7h-1zM772 182h1v7h-1zM773 182h1v7h-1zM774 182h1v7h-1zM775 182h1v10h-1zM776 182h1v9h-1zM777 182h1v9h-1zM778 180h1v9h-1zM779 182h1v9h-1zM780 182h1v7h-1zM781 182h1v7h-1zM782 182h1v7h-1zM783 182h1v7h-1zM784 180h1v9h-1zM785 182h1v7h-1zM786 182h1v7h-1zM787 182h1v7h-1zM788 180h1v9h-1zM789 182h1v7h-1zM790 180h1v9h-1zM791 182h1v7h-1zM792 182h1v7h-1zM793 182h1v7h-1zM794 182h1v7h-1zM795 182h1v7h-1zM796 182h1v7h-1zM797 182h1v7h-1zM798 182h1v7h-1zM799 182h1v7h-1zM800 180h1v9h-1zM801 180h1v9h-1zM802 182h1v7h-1zM803 182h1v7h-1zM804 182h1v7h-1zM805 182h1v7h-1zM806 182h1v7h-1zM807 181h1v8h-1zM808 181h1v8h-1zM809 181h1v10h-1zM810 181h1v8h-1zM811 182h1v7h-1zM812 182h1v7h-1zM813 180h1v12h-1zM814 182h1v7h-1zM815 182h1v7h-1zM816 182h1v7h-1zM817 182h1v7h-1zM818 182h1v7h-1zM819 182h1v7h-1zM820 182h1v7h-1zM821 182h1v7h-1zM822 182h1v7h-1zM823 182h1v7h-1zM824 182h1v7h-1zM825 182h1v7h-1zM826 182h1v7h-1zM827 182h1v7h-1zM828 182h1v7h-1zM829 182h1v7h-1zM830 182h1v7h-1zM831 182h1v7h-1zM832 182h1v7h-1zM833 182h1v7h-1zM834 182h1v7h-1zM835 182h1v7h-1zM836 182h1v7h-1zM837 182h1v7h-1zM838 182h1v7h-1zM839 182h1v7h-1zM840 182h1v7h-1zM841 182h1v7h-1zM842 182h1v7h-1zM843 180h1v12h-1zM844 180h1v12h-1zM845 182h1v7h-1zM846 180h1v9h-1zM847 180h1v9h-1zM848 182h1v7h-1zM849 182h1v7h-1zM850 182h1v7h-1zM851 182h1v7h-1zM852 182h1v7h-1zM853 182h1v7h-1zM854 182h1v9h-1zM855 182h1v7h-1zM856 180h1v9h-1zM857 180h1v9h-1zM858 182h1v7h-1zM859 182h1v7h-1zM860 182h1v7h-1zM861 182h1v7h-1zM862 180h1v11h-1zM863 182h1v8h-1zM864 182h1v8h-1zM865 182h1v8h-1zM866 182h1v8h-1zM867 182h1v8h-1zM868 182h1v8h-1zM869 182h1v8h-1zM870 182h1v8h-1zM871 182h1v8h-1zM872 182h1v8h-1zM873 182h1v11h-1zM874 180h1v12h-1zM875 182h1v10h-1zM876 182h1v8h-1zM877 182h1v8h-1zM878 182h1v8h-1zM879 180h1v10h-1zM880 182h1v8h-1zM881 182h1v8h-1zM882 182h1v8h-1zM883 182h1v8h-1zM884 182h1v8h-1zM885 182h1v8h-1zM886 182h1v8h-1zM887 182h1v8h-1zM888 182h1v8h-1zM889 180h1v10h-1zM890 180h1v10h-1zM891 182h1v8h-1zM892 182h1v8h-1zM893 182h1v8h-1zM894 182h1v8h-1zM895 182h1v8h-1zM896 182h1v8h-1zM897 180h1v10h-1zM898 180h1v10h-1zM899 180h1v10h-1zM900 182h1v8h-1zM901 182h1v8h-1zM902 182h1v8h-1zM903 182h1v8h-1zM904 182h1v8h-1zM905 181h1v8h-1zM906 181h1v8h-1zM907 181h1v8h-1zM908 181h1v8h-1zM909 181h1v8h-1zM910 181h1v8h-1zM911 179h1v10h-1zM912 181h1v8h-1zM913 181h1v8h-1zM914 179h1v10h-1zM915 181h1v8h-1zM916 181h1v8h-1zM917 181h1v8h-1zM918 181h1v8h-1zM919 181h1v8h-1zM920 181h1v8h-1zM921 181h1v8h-1zM922 181h1v8h-1zM923 181h1v8h-1zM924 181h1v8h-1zM925 181h1v8h-1zM926 181h1v8h-1zM927 181h1v8h-1zM928 182h1v8h-1zM929 180h1v10h-1zM930 180h1v10h-1zM931 182h1v8h-1zM932 182h1v8h-1zM933 182h1v8h-1zM934 182h1v8h-1zM935 182h1v8h-1zM936 182h1v10h-1zM937 182h1v8h-1zM938 182h1v8h-1zM939 182h1v8h-1zM940 182h1v8h-1zM941 180h1v10h-1zM942 180h1v10h-1zM943 182h1v10h-1zM944 180h1v12h-1zM945 180h1v10h-1zM946 180h1v10h-1zM947 182h1v8h-1zM948 182h1v8h-1zM949 180h1v10h-1zM950 180h1v10h-1zM951 180h1v10h-1zM952 182h1v8h-1zM953 182h1v8h-1zM954 182h1v8h-1zM955 182h1v8h-1zM956 182h1v8h-1zM957 182h1v8h-1zM958 182h1v8h-1zM959 182h1v8h-1zM960 182h1v8h-1zM961 181h1v8h-1zM962 181h1v8h-1zM963 179h1v10h-1zM964 181h1v8h-1zM965 181h1v8h-1zM966 181h1v8h-1zM967 181h1v8h-1zM968 181h1v8h-1zM969 181h1v8h-1zM970 181h1v7h-1zM971 181h1v7h-1zM972 181h1v10h-1zM973 181h1v9h-1zM974 181h1v9h-1zM975 181h1v7h-1zM976 181h1v7h-1zM977 181h1v7h-1zM978 181h1v7h-1zM979 181h1v10h-1zM980 180h1v10h-1zM981 180h1v8h-1zM982 180h1v8h-1zM983 180h1v11h-1zM984 180h1v8h-1zM985 180h1v8h-1zM986 180h1v8h-1zM987 180h1v8h-1zM988 180h1v8h-1zM989 180h1v8h-1zM990 180h1v8h-1zM991 180h1v8h-1zM992 180h1v8h-1zM993 180h1v8h-1zM994 180h1v8h-1zM995 180h1v8h-1zM996 180h1v8h-1zM997 180h1v8h-1zM998 180h1v8h-1zM999 180h1v8h-1zM1000 180h1v8h-1zM1001 180h1v8h-1zM1002 178h1v10h-1zM1003 180h1v8h-1zM1004 180h1v8h-1zM1005 180h1v8h-1zM1006 180h1v11h-1zM1007 180h1v8h-1zM1008 180h1v8h-1zM1009 180h1v8h-1zM1010 180h1v8h-1zM1011 178h1v10h-1zM1012 180h1v8h-1zM1013 180h1v8h-1zM1014 180h1v11h-1zM1015 180h1v8h-1zM1016 180h1v8h-1zM1017 180h1v8h-1zM1018 178h1v10h-1zM1019 180h1v8h-1zM1020 180h1v8h-1zM235 183h1v118h-1zM236 186h1v132h-1zM237 300h1v25h-1z"/>
<path fill="#ff00ff" d="M21 77h1v6h-1zM22 77h1v6h-1zM23 77h1v6h-1zM24 77h1v6h-1zM25 77h1v6h-1zM26 77h1v6h-1zM27 77h1v6h-1zM28 77h1v6h-1zM29 77h1v8h-1zM30 77h1v8h-1zM31 74h1v9h-1zM32 77h1v6h-1zM33 77h1v6h-1zM34 77h1v6h-1zM35 77h1v6h-1zM36 77h1v6h-1zM37 77h1v6h-1zM38 77h1v6h-1zM39 77h1v6h-1zM40 77h1v6h-1zM41 77h1v6h-1zM42 77h1v6h-1zM43 77h1v6h-1zM44 75h1v8h-1zM45 77h1v6h-1zM46 77h1v6h-1zM47 77h1v6h-1zM48 75h1v10h-1zM49 77h1v6h-1zM50 77h1v6h-1zM51 77h1v6h-1zM52 77h1v6h-1zM53 77h1v8h-1zM54 77h1v9h-1zM55 74h1v11h-1zM56 77h1v6h-1zM57 77h1v6h-1zM58 77h1v6h-1zM59 77h1v6h-1zM60 77h1v6h-1zM61 77h1v6h-1zM62 77h1v6h-1zM63 77h1v6h-1zM64 77h1v6h-1zM65 77h1v6h-1zM66 75h1v8h-1zM67 74h1v9h-1zM68 75h1v8h-1zM69 77h1v6h-1zM70 75h1v8h-1zM71 77h1v6h-1zM72 77h1v6h-1zM73 77h1v6h-1zM74 77h1v6h-1zM75 77h1v6h-1zM76 74h1v9h-1zM77 77h1v6h-1zM78 77h1v6h-1zM79 74h1v9h-1zM80 77h1v9h-1zM81 77h1v6h-1zM82 77h1v6h-1zM83 74h1v9h-1zM84 74h1v9h-1zM85 77h1v6h-1zM86 77h1v6h-1zM87 77h1v6h-1zM88 77h1v6h-1zM89 77h1v6h-1zM90 75h1v8h-1zM91 77h1v6h-1zM92 77h1v6h-1zM93 77h1v6h-1zM94 77h1v6h-1zM95 74h1v12h-1zM96 77h1v8h-1zM97 77h1v6h-1zM98 77h1v6h-1zM99 77h1v6h-1zM100 77h1v6h-1zM101 77h1v6h-1zM102 77h1v6h-1zM103 77h1v6h-1zM104 77h1v6h-1zM105 77h1v6h-1zM106 77h1v8h-1zM107 77h1v9h-1zM108 74h1v9h-1zM109 74h1v9h-1zM110 75h1v8h-1zM111 77h1v6h-1zM112 77h1v8h-1zM113 77h1v6h-1zM114 77h1v6h-1zM115 77h1v6h-1zM116 77h1v6h-1zM117 77h1v6h-1zM118 77h1v6h-1zM119 77h1v6h-1zM120 74h1v9h-1zM121 77h1v6h-1zM122 77h1v6h-1zM123 77h1v6h-1zM124 77h1v6h-1zM125 77h1v6h-1zM126 77h1v6h-1zM127 74h1v9h-1zM128 77h1v6h-1zM129 77h1v6h-1zM130 77h1v6h-1zM131 74h1v9h-1zM132 77h1v9h-1zM133 77h1v8h-1zM134 77h1v6h-1zM135 77h1v6h-1zM136 77h1v6h-1zM137 77h1v6h-1zM138 77h1v6h-1zM139 77h1v6h-1zM140 77h1v6h-1zM141 77h1v6h-1zM142 77h1v6h-1zM143 77h1v6h-1zM144 77h1v6h-1zM145 77h1v6h-1zM146 77h1v6h-1zM147 77h1v6h-1zM148 77h1v8h-1zM149 77h1v6h-1zM150 77h1v6h-1zM151 77h1v6h-1zM152 75h1v8h-1zM153 77h1v6h-1zM154 77h1v6h-1zM155 77h1v6h-1zM156 77h1v6h-1zM157 77h1v6h-1zM158 77h1v6h-1zM159 77h1v6h-1zM160 77h1v6h-1zM161 77h1v6h-1zM162 77h1v6h-1zM163 77h1v6h-1zM164 77h1v9h-1zM165 77h1v8h-1zM166 77h1v6h-1zM167 77h1v6h-1zM168 74h1v9h-1zM169 77h1v6h-1zM170 77h1v6h-1zM171 77h1v9h-1zM172 75h1v8h-1zM173 77h1v6h-1zM174 77h1v9h-1zM175 77h1v6h-1zM176 74h1v12h-1zM177 77h1v6h-1zM178 77h1v6h-1zM179 77h1v6h-1zM180 77h1v6h-1zM181 77h1v6h-1zM182 77h1v8h-1zM183 77h1v6h-1zM184 77h1v6h-1zM185 77h1v6h-1zM186 77h1v6h-1zM187 77h1v6h-1zM188 74h1v9h-1zM189 77h1v6h-1zM190 77h1v6h-1zM191 77h1v6h-1zM192 77h1v6h-1zM193 74h1v9h-1zM194 74h1v12h-1zM195 77h1v6h-1zM196 77h1v6h-1zM197 77h1v6h-1zM198 77h1v6h-1zM199 77h1v6h-1zM200 77h1v6h-1zM201 75h1v8h-1zM202 75h1v8h-1zM203 77h1v6h-1zM204 77h1v6h-1zM205 74h1v9h-1zM206 74h1v12h-1zM207 77h1v6h-1zM208 77h1v6h-1zM209 77h1v6h-1zM210 77h1v6h-1zM211 77h1v6h-1zM212 75h1v8h-1zM213 77h1v6h-1zM214 77h1v6h-1zM215 77h1v6h-1zM216 77h1v6h-1zM217 77h1v6h-1zM218 77h1v6h-1zM219 77h1v6h-1zM220 77h1v6h-1zM221 77h1v6h-1zM222 77h1v6h-1zM223 77h1v6h-1zM224 75h1v8h-1zM225 74h1v9h-1zM226 77h1v6h-1zM227 77h1v6h-1zM228 77h1v6h-1zM229 77h1v6h-1zM230 77h1v6h-1zM231 77h1v6h-1zM232 77h1v6h-1zM233 77h1v6h-1zM234 77h1v6h-1zM278 77h1v6h-1zM279 77h1v6h-1zM280 77h1v6h-1zM281 77h1v6h-1zM282 77h1v6h-1zM283 77h1v6h-1zM284 77h1v6h-1zM285 74h1v9h-1zM286 77h1v6h-1zM287 77h1v6h-1zM288 77h1v6h-1zM289 77h1v6h-1zM290 77h1v6h-1zM291 77h1v6h-1zM292 77h1v6h-1zM293 77h1v6h-1zM294 77h1v9h-1zM295 77h1v9h-1zM296 77h1v6h-1zM297 77h1v6h-1zM298 77h1v9h-1zM299 77h1v6h-1zM300 77h1v6h-1zM301 77h1v6h-1zM302 77h1v6h-1zM303 74h1v11h-1zM304 74h1v9h-1zM305 77h1v6h-1zM306 77h1v6h-1zM307 77h1v6h-1zM308 77h1v6h-1zM309 77h1v9h-1zM310 77h1v6h-1zM311 77h1v6h-1zM312 77h1v6h-1zM313 74h1v9h-1zM314 77h1v6h-1zM315 77h1v6h-1zM316 75h1v8h-1zM317 77h1v6h-1zM318 77h1v9h-1zM319 77h1v6h-1zM320 77h1v6h-1zM321 77h1v6h-1zM322 77h1v6h-1zM323 77h1v6h-1zM324 77h1v6h-1zM325 77h1v6h-1zM326 77h1v6h-1zM327 74h1v9h-1zM328 74h1v9h-1zM329 77h1v6h-1zM330 77h1v6h-1zM331 77h1v6h-1zM332 77h1v6h-1zM333 77h1v6h-1zM334 74h1v9h-1zM335 75h1v8h-1zM336 77h1v6h-1zM337 77h1v6h-1zM338 77h1v6h-1zM339 77h1v6h-1zM340 77h1v6h-1zM341 77h1v6h-1zM342 77h1v6h-1zM343 77h1v6h-1zM344 77h1v6h-1zM345 77h1v9h-1zM346 77h1v6h-1zM347 77h1v6h-1zM348 77h1v6h-1zM349 77h1v6h-1zM350 77h1v6h-1zM351 77h1v6h-1zM352 77h1v8h-1zM353 77h1v6h-1zM354 77h1v6h-1zM355 77h1v6h-1zM356 77h1v6h-1zM357 77h1v6h-1zM358 75h1v8h-1zM359 77h1v6h-1zM360 77h1v6h-1zM361 77h1v6h-1zM362 77h1v9h-1zM363 77h1v6h-1zM364 77h1v6h-1zM365 77h1v6h-1zM366 77h1v6h-1zM367 74h1v9h-1zM368 74h1v12h-1zM369 77h1v6h-1zM370 77h1v6h-1zM371 77h1v6h-1zM372 77h1v6h-1zM373 77h1v6h-1zM374 77h1v6h-1zM375 77h1v6h-1zM376 77h1v6h-1zM377 77h1v6h-1zM378 77h1v6h-1zM379 77h1v6h-1zM380 77h1v6h-1zM381 74h1v9h-1zM382 77h1v9h-1zM383 77h1v6h-1zM384 77h1v6h-1zM385 77h1v6h-1zM386 77h1v6h-1zM387 77h1v6h-1zM388 77h1v6h-1zM389 77h1v6h-1zM390 77h1v6h-1zM391 77h1v6h-1zM392 77h1v6h-1zM393 77h1v6h-1zM394 77h1v6h-1zM395 77h1v6h-1zM396 77h1v6h-1zM397 77h1v6h-1zM398 77h1v9h-1zM399 77h1v9h-1zM400 77h1v6h-1zM401 77h1v6h-1zM402 74h1v9h-1zM403 77h1v6h-1zM404 74h1v9h-1zM405 77h1v6h-1zM406 77h1v6h-1zM407 77h1v6h-1zM408 77h1v6h-1zM409 77h1v6h-1zM410 77h1v9h-1zM411 77h1v6h-1zM412 74h1v9h-1zM413 74h1v9h-1zM414 77h1v6h-1zM415 77h1v6h-1zM416 77h1v6h-1zM417 77h1v6h-1zM418 77h1v9h-1zM419 77h1v6h-1zM420 77h1v6h-1zM421 77h1v6h-1zM422 77h1v6h-1zM423 77h1v6h-1zM424 77h1v6h-1zM425 77h1v6h-1zM426 74h1v9h-1zM427 77h1v6h-1zM428 77h1v6h-1zM429 77h1v6h-1zM430 77h1v6h-1zM431 77h1v6h-1zM432 74h1v9h-1zM433 77h1v6h-1zM434 77h1v6h-1zM435 75h1v8h-1zM436 77h1v6h-1zM437 77h1v6h-1zM438 77h1v6h-1zM439 77h1v6h-1zM440 74h1v9h-1zM441 74h1v9h-1zM442 77h1v6h-1zM443 77h1v6h-1zM444 77h1v6h-1zM445 77h1v6h-1zM446 77h1v6h-1zM447 77h1v6h-1zM448 77h1v6h-1zM449 74h1v11h-1zM450 74h1v9h-1zM451 77h1v6h-1zM452 77h1v6h-1zM453 77h1v9h-1zM454 77h1v6h-1zM455 77h1v6h-1zM456 77h1v6h-1zM457 77h1v9h-1zM458 77h1v8h-1zM459 77h1v8h-1zM460 77h1v6h-1zM461 77h1v6h-1zM462 77h1v6h-1zM463 77h1v6h-1zM464 77h1v6h-1zM465 77h1v6h-1zM466 77h1v6h-1zM467 77h1v6h-1zM468 77h1v6h-1zM469 77h1v6h-1zM470 77h1v6h-1zM471 77h1v6h-1zM472 77h1v9h-1zM473 77h1v6h-1zM474 77h1v6h-1zM475 77h1v6h-1zM476 74h1v9h-1zM477 75h1v8h-1zM478 74h1v9h-1zM479 77h1v6h-1zM480 77h1v6h-1zM481 77h1v6h-1zM482 77h1v6h-1zM483 77h1v6h-1zM484 77h1v6h-1zM485 77h1v6h-1zM486 74h1v9h-1zM487 74h1v9h-1zM488 77h1v6h-1zM489 77h1v6h-1zM490 77h1v6h-1zM491 77h1v6h-1zM492 77h1v6h-1zM493 77h1v6h-1zM494 77h1v6h-1zM495 77h1v6h-1zM496 77h1v6h-1zM497 77h1v6h-1zM498 75h1v8h-1zM499 77h1v6h-1zM500 74h1v9h-1zM501 75h1v8h-1zM502 74h1v9h-1zM503 77h1v6h-1zM504 77h1v6h-1zM505 77h1v8h-1zM506 77h1v6h-1zM507 77h1v6h-1zM508 77h1v6h-1zM509 77h1v6h-1zM510 77h1v6h-1zM511 77h1v6h-1zM512 77h1v6h-1zM513 74h1v9h-1zM514 77h1v6h-1zM515 77h1v6h-1zM516 77h1v6h-1zM517 74h1v9h-1zM518 77h1v6h-1zM519 77h1v6h-1zM520 77h1v6h-1zM521 77h1v6h-1zM522 77h1v6h-1zM523 77h1v6h-1zM524 74h1v9h-1zM525 74h1v9h-1zM526 77h1v6h-1zM527 75h1v8h-1zM528 77h1v6h-1zM529 77h1v9h-1zM530 77h1v6h-1zM531 77h1v6h-1zM532 77h1v6h-1zM533 77h1v6h-1zM534 77h1v6h-1zM535 77h1v9h-1zM536 74h1v12h-1zM537 77h1v6h-1zM538 77h1v6h-1zM539 77h1v6h-1zM540 77h1v6h-1zM541 77h1v6h-1zM542 77h1v8h-1zM543 77h1v9h-1zM544 77h1v6h-1zM545 77h1v6h-1zM546 77h1v9h-1zM547 77h1v9h-1zM548 77h1v6h-1zM549 77h1v6h-1zM550 77h1v6h-1zM551 77h1v6h-1zM552 77h1v6h-1zM553 77h1v6h-1zM554 77h1v6h-1zM555 77h1v6h-1zM556 77h1v6h-1zM557 77h1v6h-1zM558 77h1v6h-1zM559 77h1v6h-1zM560 74h1v9h-1zM561 77h1v6h-1zM562 77h1v6h-1zM563 74h1v9h-1zM564 77h1v6h-1zM565 77h1v6h-1zM566 77h1v6h-1zM567 75h1v8h-1zM568 77h1v6h-1zM569 77h1v6h-1zM570 77h1v6h-1zM571 77h1v6h-1zM572 77h1v6h-1zM573 77h1v6h-1zM574 77h1v6h-1zM575 77h1v6h-1zM576 77h1v6h-1zM577 77h1v6h-1zM578 77h1v6h-1zM579 77h1v9h-1zM580 77h1v6h-1zM581 74h1v9h-1zM582 74h1v9h-1zM583 77h1v6h-1zM584 74h1v9h-1zM585 77h1v6h-1zM586 77h1v6h-1zM587 77h1v9h-1zM588 75h1v11h-1zM589 77h1v6h-1zM590 77h1v6h-1zM591 74h1v9h-1zM592 77h1v8h-1zM593 77h1v6h-1zM594 77h1v6h-1zM595 77h1v6h-1zM596 77h1v6h-1zM597 77h1v6h-1zM598 77h1v6h-1zM599 77h1v6h-1zM600 77h1v6h-1zM601 77h1v6h-1zM602 75h1v8h-1zM603 75h1v8h-1zM604 77h1v6h-1zM605 77h1v6h-1zM606 77h1v6h-1zM607 77h1v6h-1zM608 77h1v6h-1zM609 77h1v6h-1zM610 77h1v6h-1zM611 77h1v6h-1zM612 77h1v6h-1zM613 77h1v6h-1zM614 77h1v6h-1zM615 77h1v6h-1zM616 77h1v6h-1zM617 77h1v6h-1zM618 77h1v6h-1zM619 77h1v6h-1zM620 77h1v6h-1zM621 77h1v6h-1zM622 77h1v6h-1zM623 77h1v6h-1zM624 77h1v6h-1zM625 74h1v9h-1zM626 74h1v9h-1zM627 74h1v9h-1zM628 77h1v6h-1zM629 77h1v6h-1zM630 74h1v9h-1zM631 77h1v6h-1zM632 77h1v6h-1zM633 77h1v6h-1zM634 74h1v9h-1zM635 77h1v6h-1zM636 77h1v6h-1zM637 75h1v8h-1zM638 74h1v9h-1zM639 77h1v6h-1zM640 77h1v8h-1zM641 74h1v9h-1zM642 77h1v6h-1zM643 77h1v6h-1zM644 77h1v6h-1zM645 77h1v6h-1zM646 77h1v6h-1zM647 77h1v6h-1zM648 77h1v6h-1zM649 77h1v6h-1zM650 77h1v6h-1zM651 77h1v6h-1zM652 77h1v6h-1zM653 77h1v6h-1zM654 77h1v6h-1zM655 77h1v8h-1zM656 77h1v6h-1zM657 77h1v6h-1zM658 74h1v9h-1zM659 75h1v8h-1zM660 77h1v6h-1zM661 77h1v6h-1zM662 77h1v6h-1zM663 77h1v6h-1zM664 77h1v6h-1zM665 77h1v6h-1zM666 77h1v9h-1zM667 77h1v6h-1zM668 77h1v6h-1zM669 77h1v6h-1zM670 77h1v9h-1zM671 77h1v6h-1zM672 77h1v9h-1zM673 77h1v9h-1zM674 77h1v9h-1zM675 77h1v6h-1zM676 77h1v6h-1zM677 77h1v8h-1zM678 77h1v6h-1zM679 77h1v6h-1zM680 77h1v6h-1zM681 77h1v6h-1zM682 77h1v6h-1zM683 77h1v6h-1zM684 77h1v9h-1zM685 77h1v6h-1zM686 77h1v6h-1zM687 77h1v6h-1zM688 77h1v9h-1zM689 77h1v9h-1zM690 77h1v6h-1zM691 77h1v6h-1zM692 74h1v9h-1zM693 77h1v6h-1zM694 77h1v6h-1zM695 77h1v6h-1zM696 74h1v9h-1zM697 74h1v9h-1zM698 77h1v6h-1zM699 77h1v6h-1zM700 77h1v8h-1zM701 77h1v9h-1zM702 77h1v9h-1zM703 77h1v6h-1zM704 77h1v8h-1zM705 77h1v6h-1zM706 77h1v6h-1zM707 77h1v6h-1zM708 77h1v6h-1zM709 77h1v9h-1zM710 77h1v8h-1zM711 77h1v6h-1zM712 77h1v6h-1zM713 77h1v6h-1zM714 77h1v8h-1zM715 77h1v6h-1zM716 77h1v9h-1zM717 77h1v6h-1zM718 77h1v9h-1zM719 77h1v9h-1zM720 77h1v6h-1zM721 77h1v6h-1zM722 77h1v6h-1zM723 77h1v6h-1zM724 77h1v6h-1zM725 77h1v6h-1zM726 77h1v6h-1zM727 77h1v6h-1zM728 77h1v6h-1zM729 77h1v6h-1zM730 77h1v6h-1zM731 77h1v6h-1zM732 77h1v6h-1zM733 77h1v6h-1zM734 77h1v6h-1zM735 77h1v6h-1zM736 77h1v8h-1zM737 74h1v9h-1zM738 77h1v6h-1zM739 77h1v6h-1zM740 77h1v6h-1zM741 74h1v9h-1zM742 77h1v6h-1zM743 77h1v6h-1zM744 77h1v6h-1zM745 77h1v6h-1zM746 77h1v6h-1zM747 77h1v6h-1zM748 77h1v6h-1zM749 77h1v9h-1zM750 77h1v6h-1zM751 77h1v6h-1zM752 77h1v6h-1zM753 77h1v9h-1zM754 77h1v6h-1zM755 77h1v6h-1zM756 77h1v6h-1zM757 77h1v6h-1zM758 77h1v8h-1zM759 77h1v6h-1zM760 77h1v6h-1zM761 77h1v6h-1zM762 77h1v9h-1zM763 77h1v6h-1zM764 74h1v9h-1zM765 74h1v9h-1zM766 75h1v8h-1zM767 77h1v6h-1zM768 77h1v6h-1zM769 77h1v6h-1zM770 77h1v6h-1zM771 77h1v6h-1zM772 77h1v6h-1zM773 77h1v9h-1zM774 77h1v6h-1zM775 77h1v6h-1zM776 77h1v6h-1zM777 77h1v6h-1zM778 77h1v6h-1zM779 77h1v6h-1zM780 77h1v6h-1zM781 77h1v6h-1zM782 74h1v9h-1zM783 75h1v8h-1zM784 77h1v6h-1zM785 75h1v8h-1zM786 77h1v6h-1zM787 77h1v6h-1zM788 77h1v6h-1zM789 77h1v6h-1zM790 77h1v6h-1zM791 74h1v9h-1zM792 75h1v8h-1zM793 77h1v6h-1zM794 77h1v6h-1zM795 77h1v6h-1zM796 77h1v6h-1zM797 77h1v6h-1zM798 75h1v8h-1zM799 77h1v6h-1zM800 74h1v9h-1zM801 75h1v8h-1zM802 77h1v6h-1zM803 77h1v6h-1zM804 74h1v9h-1zM805 74h1v9h-1zM806 74h1v9h-1zM807 77h1v6h-1zM808 77h1v6h-1zM809 77h1v6h-1zM810 77h1v9h-1zM811 77h1v9h-1zM812 77h1v6h-1zM813 77h1v6h-1zM814 77h1v6h-1zM815 77h1v8h-1zM816 77h1v6h-1zM817 77h1v6h-1zM818 77h1v6h-1zM819 77h1v6h-1zM820 77h1v6h-1zM821 77h1v6h-1zM822 77h1v6h-1zM823 77h1v6h-1zM824 77h1v6h-1zM825 77h1v6h-1zM826 77h1v6h-1zM827 77h1v6h-1zM828 77h1v6h-1zM829 77h1v6h-1zM830 77h1v6h-1zM831 77h1v6h-1zM832 77h1v6h-1zM833 77h1v6h-1zM834 77h1v6h-1zM835 77h1v6h-1zM836 77h1v6h-1zM837 77h1v6h-1zM838 77h1v8h-1zM839 77h1v8h-1zM840 77h1v9h-1zM841 77h1v6h-1zM842 77h1v9h-1zM843 77h1v6h-1zM844 77h1v6h-1zM845 77h1v6h-1zM846 74h1v9h-1zM847 77h1v6h-1zM848 77h1v6h-1zM849 77h1v6h-1zM850 77h1v6h-1zM851 77h1v6h-1zM852 77h1v9h-1zM853 77h1v9h-1zM854 75h1v8h-1zM855 77h1v6h-1zM856 77h1v6h-1zM857 74h1v9h-1zM858 77h1v8h-1zM859 77h1v6h-1zM860 77h1v6h-1zM861 77h1v6h-1zM862 77h1v6h-1zM863 77h1v6h-1zM864 77h1v6h-1zM865 77h1v6h-1zM866 77h1v6h-1zM867 77h1v9h-1zM868 77h1v6h-1zM869 77h1v6h-1zM870 77h1v6h-1zM871 77h1v6h-1zM872 77h1v6h-1zM873 77h1v6h-1zM874 77h1v6h-1zM875 77h1v9h-1zM876 77h1v9h-1zM877 77h1v6h-1zM878 77h1v6h-1zM879 75h1v8h-1zM880 74h1v11h-1zM881 74h1v12h-1zM882 77h1v6h-1zM883 77h1v6h-1zM884 75h1v8h-1zM885 77h1v6h-1zM886 77h1v6h-1zM887 77h1v6h-1zM888 77h1v6h-1zM889 77h1v6h-1zM890 77h1v9h-1zM891 77h1v6h-1zM892 77h1v6h-1zM893 77h1v6h-1zM894 74h1v9h-1zM895 77h1v6h-1zM896 77h1v6h-1zM897 77h1v6h-1zM898 77h1v6h-1zM899 77h1v6h-1zM900 77h1v6h-1zM901 77h1v9h-1zM902 77h1v6h-1zM903 77h1v6h-1zM904 77h1v6h-1zM905 77h1v6h-1zM906 77h1v6h-1zM907 77h1v6h-1zM908 77h1v6h-1zM909 77h1v6h-1zM910 74h1v9h-1zM911 74h1v9h-1zM912 77h1v6h-1zM913 77h1v6h-1zM914 74h1v9h-1zM915 75h1v8h-1zM916 75h1v8h-1zM917 77h1v6h-1zM918 77h1v6h-1zM919 77h1v6h-1zM920 77h1v6h-1zM921 77h1v6h-1zM922 77h1v6h-1zM923 77h1v6h-1zM924 77h1v6h-1zM925 77h1v6h-1zM926 75h1v8h-1zM927 74h1v9h-1zM928 77h1v6h-1zM929 77h1v6h-1zM930 77h1v6h-1zM931 77h1v6h-1zM932 77h1v6h-1zM933 77h1v6h-1zM934 77h1v6h-1zM935 74h1v9h-1zM936 74h1v9h-1zM937 74h1v12h-1zM938 77h1v6h-1zM939 77h1v6h-1zM940 75h1v8h-1zM941 77h1v6h-1zM942 77h1v6h-1zM943 77h1v6h-1zM944 77h1v8h-1zM945 77h1v8h-1zM946 77h1v6h-1zM947 74h1v9h-1zM948 77h1v6h-1zM949 77h1v6h-1zM950 77h1v6h-1zM951 74h1v9h-1zM952 77h1v6h-1zM953 77h1v6h-1zM954 74h1v9h-1zM955 77h1v6h-1zM956 77h1v6h-1zM957 77h1v6h-1zM958 77h1v9h-1zM959 77h1v6h-1zM960 77h1v8h-1zM961 77h1v6h-1zM962 77h1v9h-1zM963 77h1v6h-1zM964 77h1v6h-1zM965 77h1v6h-1zM966 77h1v6h-1zM967 77h1v6h-1zM968 77h1v6h-1zM969 77h1v9h-1zM970 77h1v8h-1zM971 77h1v6h-1zM972 77h1v6h-1zM973 77h1v9h-1zM974 77h1v6h-1zM975 77h1v6h-1zM976 77h1v6h-1zM977 77h1v6h-1zM978 75h1v8h-1zM979 77h1v6h-1zM980 77h1v6h-1zM981 77h1v6h-1zM982 77h1v6h-1zM983 77h1v6h-1zM984 77h1v6h-1zM985 77h1v6h-1zM986 77h1v6h-1zM987 77h1v9h-1zM988 74h1v9h-1zM989 77h1v6h-1zM990 77h1v6h-1zM991 77h1v6h-1zM992 77h1v6h-1zM993 77h1v6h-1zM994 77h1v6h-1zM995 74h1v9h-1zM996 77h1v6h-1zM997 77h1v9h-1zM998 74h1v12h-1zM999 77h1v9h-1zM1000 74h1v9h-1zM1001 77h1v9h-1zM1002 77h1v6h-1zM1003 77h1v6h-1zM1004 77h1v6h-1zM1005 77h1v6h-1zM1006 77h1v6h-1zM1007 77h1v6h-1zM1008 77h1v6h-1zM1009 77h1v6h-1zM1010 77h1v6h-1zM1011 77h1v6h-1zM1012 77h1v6h-1zM1013 77h1v6h-1zM1014 77h1v6h-1zM1015 77h1v6h-1zM1016 77h1v6h-1zM1017 77h1v9h-1zM1018 77h1v6h-1zM1019 77h1v6h-1zM1020 77h1v6h-1zM235 77h1v224h-1zM236 290h1v215h-1zM237 250h1v255h-1zM238 166h1v85h-1zM239 142h1v25h-1zM240 136h1v21h-1zM241 142h1v20h-1zM242 129h1v22h-1zM243 106h1v35h-1zM244 103h1v32h-1zM245 95h1v13h-1zM246 92h1v10h-1zM247 87h1v8h-1zM248 84h1v8h-1zM249 84h1v8h-1zM250 84h1v8h-1zM251 82h1v8h-1zM252 82h1v7h-1zM253 79h1v9h-1zM254 79h1v9h-1zM255 77h1v10h-1zM256 79h1v7h-1zM257 79h1v9h-1zM258 79h1v7h-1zM259 79h1v7h-1zM260 79h1v7h-1zM261 79h1v7h-1zM262 79h1v9h-1zM263 79h1v7h-1zM264 77h1v9h-1zM265 79h1v7h-1zM266 79h1v9h-1zM267 79h1v7h-1zM268 79h1v9h-1zM269 77h1v9h-1zM270 77h1v11h-1zM271 79h1v7h-1zM272 79h1v9h-1zM273 77h1v9h-1zM274 79h1v7h-1zM275 77h1v9h-1zM276 79h1v9h-1zM277 79h1v7h-1z"/>
<path fill="#f2f2f2" d="M21 30h1v1h-1zM21 43h1v1h-1zM21 56h1v1h-1zM21 69h1v1h-1zM21 95h1v1h-1zM21 108h1v1h-1zM21 121h1v1h-1zM21 134h1v1h-1zM21 160h1v1h-1zM21 173h1v1h-1zM21 186h1v1h-1zM21 199h1v1h-1zM21 225h1v1h-1zM21 238h1v1h-1zM21 251h1v1h-1zM21 264h1v1h-1zM21 290h1v1h-1zM21 303h1v1h-1zM21 316h1v1h-1zM21 329h1v1h-1zM21 342h1v1h-1zM21 355h1v1h-1zM21 368h1v1h-1zM21 381h1v1h-1zM21 394h1v1h-1zM21 420h1v1h-1zM21 433h1v1h-1zM21 446h1v1h-1zM21 459h1v1h-1zM21 485h1v1h-1zM21 498h1v1h-1zM21 511h1v1h-1zM21 524h1v1h-1zM21 550h1v1h-1zM21 563h1v1h-1zM21 576h1v1h-1zM21 589h1v1h-1zM21 615h1v1h-1zM21 628h1v1h-1zM21 641h1v1h-1zM21 654h1v1h-1zM22 82h1v1h-1zM22 147h1v1h-1zM22 212h1v1h-1zM22 277h1v1h-1zM22 407h1v1h-1zM22 472h1v1h-1zM22 537h1v1h-1zM22 602h1v1h-1zM23 30h1v1h-1zM23 43h1v1h-1zM23 56h1v1h-1zM23 69h1v1h-1zM23 95h1v1h-1zM23 108h1v1h-1zM23 121h1v1h-1zM23 134h1v1h-1zM23 160h1v1h-1zM23 173h1v1h-1zM23 186h1v1h-1zM23 199h1v1h-1zM23 225h1v1h-1zM23 238h1v1h-1zM23 251h1v1h-1zM23 264h1v1h-1zM23 290h1v1h-1zM23 303h1v1h-1zM23 316h1v1h-1zM23 329h1v1h-1zM23 342h1v1h-1zM23 355h1v1h-1zM23 368h1v1h-1zM23 381h1v1h-1zM23 394h1v1h-1zM23 420h1v1h-1zM23 433h1v1h-1zM23 446h1v1h-1zM23 459h1v1h-1zM23 485h1v1h-1zM23 498h1v1h-1zM23 511h1v1h-1zM23 524h1v1h-1zM23 550h1v1h-1zM23 563h1v1h-1zM23 576h1v1h-1zM23 589h1v1h-1zM23 615h1v1h-1zM23 628h1v1h-1zM23 641h1v1h-1zM23 654h1v1h-1zM24 82h1v1h-1zM24 147h1v1h-1zM24 212h1v1h-1zM24 277h1v1h-1zM24 407h1v1h-1zM24 472h1v1h-1zM24 537h1v1h-1zM24 602h1v1h-1zM25 342h1v1h-1zM26 82h1v1h-1zM26 147h1v1h-1zM26 212h1v1h-1zM26 277h1v1h-1zM26 407h1v1h-1zM26 472h1v1h-1zM26 537h1v1h-1zM26 602h1v1h-1zM27 342h1v1h-1zM29 342h1v1h-1zM31 342h1v1h-1zM33 342h1v1h-1zM35 342h1v1h-1zM37 342h1v1h-1zM39 342h1v1h-1zM41 17h1v1h-1zM41 19h1v1h-1zM41 82h1v1h-1zM41 147h1v1h-1zM41 212h1v1h-1zM41 277h1v1h-1zM41 339h1v1h-1zM41 341h1v1h-1zM41 342h1v1h-1zM41 343h1v1h-1zM41 345h1v1h-1zM41 407h1v1h-1zM41 472h1v1h-1zM41 537h1v1h-1zM41 602h1v1h-1zM41 665h1v1h-1zM41 667h1v1h-1zM43 342h1v1h-1zM45 342h1v1h-1zM47 342h1v1h-1zM49 342h1v1h-1zM51 342h1v1h-1zM53 342h1v1h-1zM55 342h1v1h-1zM57 342h1v1h-1zM59 342h1v1h-1zM61 17h1v1h-1zM61 19h1v1h-1zM61 82h1v1h-1zM61 147h1v1h-1zM61 212h1v1h-1zM61 277h1v1h-1zM61 339h1v1h-1zM61 341h1v1h-1zM61 342h1v1h-1zM61 343h1v1h-1zM61 345h1v1h-1zM61 407h1v1h-1zM61 472h1v1h-1zM61 537h1v1h-1zM61 602h1v1h-1zM61 665h1v1h-1zM61 667h1v1h-1zM63 342h1v1h-1zM65 342h1v1h-1zM67 342h1v1h-1zM69 342h1v1h-1zM71 342h1v1h-1zM73 342h1v1h-1zM75 342h1v1h-1zM77 342h1v1h-1zM79 342h1v1h-1zM81 17h1v1h-1zM81 19h1v1h-1zM81 82h1v1h-1zM81 147h1v1h-1zM81 212h1v1h-1zM81 277h1v1h-1zM81 339h1v1h-1zM81 341h1v1h-1zM81 342h1v1h-1zM81 343h1v1h-1zM81 345h1v1h-1zM81 407h1v1h-1zM81 472h1v1h-1zM81 537h1v1h-1zM81 602h1v1h-1zM81 665h1v1h-1zM81 667h1v1h-1zM83 342h1v1h-1zM85 342h1v1h-1zM87 342h1v1h-1zM89 342h1v1h-1zM91 342h1v1h-1zM93 342h1v1h-1zM95 342h1v1h-1zM97 342h1v1h-1zM99 342h1v1h-1zM101 17h1v1h-1zM101 19h1v1h-1zM101 82h1v1h-1zM101 147h1v1h-1zM101 212h1v1h-1zM101 277h1v1h-1zM101 339h1v1h-1zM101 341h1v1h-1zM101 342h1v1h-1zM101 343h1v1h-1zM101 345h1v1h-1zM101 407h1v1h-1zM101 472h1v1h-1zM101 537h1v1h-1zM101 602h1v1h-1zM101 665h1v1h-1zM101 667h1v1h-1zM103 342h1v1h-1zM105 342h1v1h-1zM107 342h1v1h-1zM109 342h1v1h-1zM111 342h1v1h-1zM113 342h1v1h-1zM115 342h1v1h-1zM117 342h1v1h-1zM119 342h1v1h-1zM121 18h1v1h-1zM121 20h1v1h-1zM121 22h1v1h-1zM121 30h1v1h-1zM121 43h1v1h-1zM121 56h1v1h-1zM121 69h1v1h-1zM121 82h1v1h-1zM121 95h1v1h-1zM121 108h1v1h-1zM121 121h1v1h-1zM121 134h1v1h-1zM121 147h1v1h-1zM121 160h1v1h-1zM121 173h1v1h-1zM121 186h1v1h-1zM121 199h1v1h-1zM121 212h1v1h-1zM121 225h1v1h-1zM121 238h1v1h-1zM121 251h1v1h-1zM121 264h1v1h-1zM121 277h1v1h-1zM121 290h1v1h-1zM121 303h1v1h-1zM121 316h1v1h-1zM121 329h1v1h-1zM121 339h1v1h-1zM121 341h1v1h-1zM121 342h1v1h-1zM121 343h1v1h-1zM121 345h1v1h-1zM121 355h1v1h-1zM121 368h1v1h-1zM121 381h1v1h-1zM121 394h1v1h-1zM121 407h1v1h-1zM121 420h1v1h-1zM121 433h1v1h-1zM121 446h1v1h-1zM121 459h1v1h-1zM121 472h1v1h-1zM121 485h1v1h-1zM121 498h1v1h-1zM121 511h1v1h-1zM121 524h1v1h-1zM121 537h1v1h-1zM121 550h1v1h-1zM121 563h1v1h-1zM121 576h1v1h-1zM121 589h1v1h-1zM121 602h1v1h-1zM121 615h1v1h-1zM121 628h1v1h-1zM121 641h1v1h-1zM121 654h1v1h-1zM121 663h1v1h-1zM121 665h1v1h-1zM121 667h1v1h-1zM123 342h1v1h-1zM125 342h1v1h-1zM127 342h1v1h-1zM129 342h1v1h-1zM131 342h1v1h-1zM133 342h1v1h-1zM135 342h1v1h-1zM137 342h1v1h-1zM139 342h1v1h-1zM141 17h1v1h-1zM141 19h1v1h-1zM141 82h1v1h-1zM141 147h1v1h-1zM141 212h1v1h-1zM141 277h1v1h-1zM141 339h1v1h-1zM141 341h1v1h-1zM141 342h1v1h-1zM141 343h1v1h-1zM141 345h1v1h-1zM141 407h1v1h-1zM141 472h1v1h-1zM141 537h1v1h-1zM141 602h1v1h-1zM141 665h1v1h-1zM141 667h1v1h-1zM143 342h1v1h-1zM145 342h1v1h-1zM147 342h1v1h-1zM149 342h1v1h-1zM151 342h1v1h-1zM153 342h1v1h-1zM155 342h1v1h-1zM157 342h1v1h-1zM159 342h1v1h-1zM161 17h1v1h-1zM161 19h1v1h-1zM161 82h1v1h-1zM161 147h1v1h-1zM161 212h1v1h-1zM161 277h1v1h-1zM161 339h1v1h-1zM161 341h1v1h-1zM161 342h1v1h-1zM161 343h1v1h-1zM161 345h1v1h-1zM161 407h1v1h-1zM161 472h1v1h-1zM161 537h1v1h-1zM161 602h1v1h-1zM161 665h1v1h-1zM161 667h1v1h-1zM163 342h1v1h-1zM165 342h1v1h-1zM167 342h1v1h-1zM169 342h1v1h-1zM171 342h1v1h-1zM173 342h1v1h-1zM175 342h1v1h-1zM177 342h1v1h-1zM179 342h1v1h-1zM181 17h1v1h-1zM181 19h1v1h-1zM181 82h1v1h-1zM181 147h1v1h-1zM181 212h1v1h-1zM181 277h1v1h-1zM181 339h1v1h-1zM181 341h1v1h-1zM181 342h1v1h-1zM181 343h1v1h-1zM181 345h1v1h-1zM181 407h1v1h-1zM181 472h1v1h-1zM181 537h1v1h-1zM181 602h1v1h-1zM181 665h1v1h-1zM181 667h1v1h-1zM183 342h1v1h-1zM185 342h1v1h-1zM187 342h1v1h-1zM189 342h1v1h-1zM191 342h1v1h-1zM193 342h1v1h-1zM195 342h1v1h-1zM197 342h1v1h-1zM199 342h1v1h-1zM201 17h1v1h-1zM201 19h1v1h-1zM201 82h1v1h-1zM201 147h1v1h-1zM201 212h1v1h-1zM201 277h1v1h-1zM201 339h1v1h-1zM201 341h1v1h-1zM201 342h1v1h-1zM201 343h1v1h-1zM201 345h1v1h-1zM201 407h1v1h-1zM201 472h1v1h-1zM201 537h1v1h-1zM201 602h1v1h-1zM201 665h1v1h-1zM201 667h1v1h-1zM203 342h1v1h-1zM205 342h1v1h-1zM207 342h1v1h-1zM209 342h1v1h-1zM211 342h1v1h-1zM213 342h1v1h-1zM215 342h1v1h-1zM217 342h1v1h-1zM219 342h1v1h-1zM221 18h1v1h-1zM221 20h1v1h-1zM221 22h1v1h-1zM221 30h1v1h-1zM221 43h1v1h-1zM221 56h1v1h-1zM221 69h1v1h-1zM221 82h1v1h-1zM221 95h1v1h-1zM221 108h1v1h-1zM221 121h1v1h-1zM221 134h1v1h-1zM221 147h1v1h-1zM221 160h1v1h-1zM221 173h1v1h-1zM221 186h1v1h-1zM221 199h1v1h-1zM221 212h1v1h-1zM221 225h1v1h-1zM221 238h1v1h-1zM221 251h1v1h-1zM221 264h1v1h-1zM221 277h1v1h-1zM221 290h1v1h-1zM221 303h1v1h-1zM221 316h1v1h-1zM221 329h1v1h-1zM221 339h1v1h-1zM221 341h1v1h-1zM221 342h1v1h-1zM221 343h1v1h-1zM221 345h1v1h-1zM221 355h1v1h-1zM221 368h1v1h-1zM221 381h1v1h-1zM221 394h1v1h-1zM221 407h1v1h-1zM221 420h1v1h-1zM221 433h1v1h-1zM221 446h1v1h-1zM221 459h1v1h-1zM221 472h1v1h-1zM221 485h1v1h-1zM221 498h1v1h-1zM221 511h1v1h-1zM221 524h1v1h-1zM221 537h1v1h-1zM221 550h1v1h-1zM221 563h1v1h-1zM221 576h1v1h-1zM221 589h1v1h-1zM221 602h1v1h-1zM221 615h1v1h-1zM221 628h1v1h-1zM221 641h1v1h-1zM221 654h1v1h-1zM221 663h1v1h-1zM221 665h1v1h-1zM221 667h1v1h-1zM223 342h1v1h-1zM225 342h1v1h-1zM227 342h1v1h-1zM229 342h1v1h-1zM231 342h1v1h-1zM233 342h1v1h-1zM235 342h1v1h-1zM237 342h1v1h-1zM239 342h1v1h-1zM241 17h1v1h-1zM241 19h1v1h-1zM241 82h1v1h-1zM241 147h1v1h-1zM241 212h1v1h-1zM241 277h1v1h-1zM241 339h1v1h-1zM241 341h1v1h-1zM241 342h1v1h-1zM241 343h1v1h-1zM241 345h1v1h-1zM241 407h1v1h-1zM241 472h1v1h-1zM241 537h1v1h-1zM241 602h1v1h-1zM241 665h1v1h-1zM241 667h1v1h-1zM243 342h1v1h-1zM245 342h1v1h-1zM247 342h1v1h-1zM249 342h1v1h-1zM251 342h1v1h-1zM253 342h1v1h-1zM255 342h1v1h-1zM257 342h1v1h-1zM259 342h1v1h-1zM261 17h1v1h-1zM261 19h1v1h-1zM261 82h1v1h-1zM261 147h1v1h-1zM261 212h1v1h-1zM261 277h1v1h-1zM261 339h1v1h-1zM261 341h1v1h-1zM261 342h1v1h-1zM261 343h1v1h-1zM261 345h1v1h-1zM261 407h1v1h-1zM261 472h1v1h-1zM261 537h1v1h-1zM261 602h1v1h-1zM261 665h1v1h-1zM261 667h1v1h-1zM263 342h1v1h-1zM265 342h1v1h-1zM267 342h1v1h-1zM269 342h1v1h-1zM271 342h1v1h-1zM273 342h1v1h-1zM275 342h1v1h-1zM277 342h1v1h-1zM279 342h1v1h-1zM281 17h1v1h-1zM281 19h1v1h-1zM281 82h1v1h-1zM281 147h1v1h-1zM281 212h1v1h-1zM281 277h1v1h-1zM281 339h1v1h-1zM281 341h1v1h-1zM281 342h1v1h-1zM281 343h1v1h-1zM281 345h1v1h-1zM281 407h1v1h-1zM281 472h1v1h-1zM281 537h1v1h-1zM281 602h1v1h-1zM281 665h1v1h-1zM281 667h1v1h-1zM283 342h1v1h-1zM285 342h1v1h-1zM287 342h1v1h-1zM289 342h1v1h-1zM291 342h1v1h-1zM293 342h1v1h-1zM295 342h1v1h-1zM297 342h1v1h-1zM299 342h1v1h-1zM301 17h1v1h-1zM301 19h1v1h-1zM301 82h1v1h-1zM301 147h1v1h-1zM301 212h1v1h-1zM301 277h1v1h-1zM301 339h1v1h-1zM301 341h1v1h-1zM301 342h1v1h-1zM301 343h1v1h-1zM301 345h1v1h-1zM301 407h1v1h-1zM301 472h1v1h-1zM301 537h1v1h-1zM301 602h1v1h-1zM301 665h1v1h-1zM301 667h1v1h-1zM303 342h1v1h-1zM305 342h1v1h-1zM307 342h1v1h-1zM309 342h1v1h-1zM311 342h1v1h-1zM313 342h1v1h-1zM315 342h1v1h-1zM317 342h1v1h-1zM319 342h1v1h-1zM321 18h1v1h-1zM321 20h1v1h-1zM321 22h1v1h-1zM321 30h1v1h-1zM321 43h1v1h-1zM321 56h1v1h-1zM321 69h1v1h-1zM321 82h1v1h-1zM321 95h1v1h-1zM321 108h1v1h-1zM321 121h1v1h-1zM321 134h1v1h-1zM321 147h1v1h-1zM321 160h1v1h-1zM321 173h1v1h-1zM321 186h1v1h-1zM321 199h1v1h-1zM321 212h1v1h-1zM321 225h1v1h-1zM321 238h1v1h-1zM321 251h1v1h-1zM321 264h1v1h-1zM321 277h1v1h-1zM321 290h1v1h-1zM321 303h1v1h-1zM321 316h1v1h-1zM321 329h1v1h-1zM321 339h1v1h-1zM321 341h1v1h-1zM321 342h1v1h-1zM321 343h1v1h-1zM321 345h1v1h-1zM321 355h1v1h-1zM321 368h1v1h-1zM321 381h1v1h-1zM321 394h1v1h-1zM321 407h1v1h-1zM321 420h1v1h-1zM321 433h1v1h-1zM321 446h1v1h-1zM321 459h1v1h-1zM321 472h1v1h-1zM321 485h1v1h-1zM321 498h1v1h-1zM321 511h1v1h-1zM321 524h1v1h-1zM321 537h1v1h-1zM321 550h1v1h-1zM321 563h1v1h-1zM321 576h1v1h-1zM321 589h1v1h-1zM321 602h1v1h-1zM321 615h1v1h-1zM321 628h1v1h-1zM321 641h1v1h-1zM321 654h1v1h-1zM321 663h1v1h-1zM321 665h1v1h-1zM321 667h1v1h-1zM323 342h1v1h-1zM325 342h1v1h-1zM327 342h1v1h-1zM329 342h1v1h-1zM331 342h1v1h-1zM333 342h1v1h-1zM335 342h1v1h-1zM337 342h1v1h-1zM339 342h1v1h-1zM341 17h1v1h-1zM341 19h1v1h-1zM341 82h1v1h-1zM341 147h1v1h-1zM341 212h1v1h-1zM341 277h1v1h-1zM341 339h1v1h-1zM341 341h1v1h-1zM341 342h1v1h-1zM341 343h1v1h-1zM341 345h1v1h-1zM341 407h1v1h-1zM341 472h1v1h-1zM341 537h1v1h-1zM341 602h1v1h-1zM341 665h1v1h-1zM341 667h1v1h-1zM343 342h1v1h-1zM345 342h1v1h-1zM347 342h1v1h-1zM349 342h1v1h-1zM351 342h1v1h-1zM353 342h1v1h-1zM355 342h1v1h-1zM357 342h1v1h-1zM359 342h1v1h-1zM361 17h1v1h-1zM361 19h1v1h-1zM361 82h1v1h-1zM361 147h1v1h-1zM361 212h1v1h-1zM361 277h1v1h-1zM361 339h1v1h-1zM361 341h1v1h-1zM361 342h1v1h-1zM361 343h1v1h-1zM361 345h1v1h-1zM361 407h1v1h-1zM361 472h1v1h-1zM361 537h1v1h-1zM361 602h1v1h-1zM361 665h1v1h-1zM361 667h1v1h-1zM363 342h1v1h-1zM365 342h1v1h-1zM367 342h1v1h-1zM369 342h1v1h-1zM371 342h1v1h-1zM373 342h1v1h-1zM375 342h1v1h-1zM377 342h1v1h-1zM379 342h1v1h-1zM381 17h1v1h-1zM381 19h1v1h-1zM381 82h1v1h-1zM381 147h1v1h-1zM381 212h1v1h-1zM381 277h1v1h-1zM381 339h1v1h-1zM381 341h1v1h-1zM381 342h1v1h-1zM381 343h1v1h-1zM381 345h1v1h-1zM381 407h1v1h-1zM381 472h1v1h-1zM381 537h1v1h-1zM381 602h1v1h-1zM381 665h1v1h-1zM381 667h1v1h-1zM383 342h1v1h-1zM385 342h1v1h-1zM387 342h1v1h-1zM389 342h1v1h-1zM391 342h1v1h-1zM393 342h1v1h-1zM395 342h1v1h-1zM397 342h1v1h-1zM399 342h1v1h-1zM401 17h1v1h-1zM401 19h1v1h-1zM401 82h1v1h-1zM401 147h1v1h-1zM401 212h1v1h-1zM401 277h1v1h-1zM401 339h1v1h-1zM401 341h1v1h-1zM401 342h1v1h-1zM401 343h1v1h-1zM401 345h1v1h-1zM401 407h1v1h-1zM401 472h1v1h-1zM401 537h1v1h-1zM401 602h1v1h-1zM401 665h1v1h-1zM401 667h1v1h-1zM403 342h1v1h-1zM405 342h1v1h-1zM407 342h1v1h-1zM409 342h1v1h-1zM411 342h1v1h-1zM413 342h1v1h-1zM415 342h1v1h-1zM417 342h1v1h-1zM419 342h1v1h-1zM421 18h1v1h-1zM421 20h1v1h-1zM421 22h1v1h-1zM421 30h1v1h-1zM421 43h1v1h-1zM421 56h1v1h-1zM421 69h1v1h-1zM421 82h1v1h-1zM421 95h1v1h-1zM421 108h1v1h-1zM421 121h1v1h-1zM421 134h1v1h-1zM421 147h1v1h-1zM421 160h1v1h-1zM421 173h1v1h-1zM421 186h1v1h-1zM421 199h1v1h-1zM421 212h1v1h-1zM421 225h1v1h-1zM421 238h1v1h-1zM421 251h1v1h-1zM421 264h1v1h-1zM421 277h1v1h-1zM421 290h1v1h-1zM421 303h1v1h-1zM421 316h1v1h-1zM421 329h1v1h-1zM421 339h1v1h-1zM421 341h1v1h-1zM421 342h1v1h-1zM421 343h1v1h-1zM421 345h1v1h-1zM421 355h1v1h-1zM421 368h1v1h-1zM421 381h1v1h-1zM421 394h1v1h-1zM421 407h1v1h-1zM421 420h1v1h-1zM421 433h1v1h-1zM421 446h1v1h-1zM421 459h1v1h-1zM421 472h1v1h-1zM421 485h1v1h-1zM421 498h1v1h-1zM421 511h1v1h-1zM421 524h1v1h-1zM421 537h1v1h-1zM421 550h1v1h-1zM421 563h1v1h-1zM421 576h1v1h-1zM421 589h1v1h-1zM421 602h1v1h-1zM421 615h1v1h-1zM421 628h1v1h-1zM421 641h1v1h-1zM421 654h1v1h-1zM421 663h1v1h-1zM421 665h1v1h-1zM421 667h1v1h-1zM423 342h1v1h-1zM425 342h1v1h-1zM427 342h1v1h-1zM429 342h1v1h-1zM431 342h1v1h-1zM433 342h1v1h-1zM435 342h1v1h-1zM437 342h1v1h-1zM439 342h1v1h-1zM441 17h1v1h-1zM441 19h1v1h-1zM441 82h1v1h-1zM441 147h1v1h-1zM441 212h1v1h-1zM441 277h1v1h-1zM441 339h1v1h-1zM441 341h1v1h-1zM441 342h1v1h-1zM441 343h1v1h-1zM441 345h1v1h-1zM441 407h1v1h-1zM441 472h1v1h-1zM441 537h1v1h-1zM441 602h1v1h-1zM441 665h1v1h-1zM441 667h1v1h-1zM443 342h1v1h-1zM445 342h1v1h-1zM447 342h1v1h-1zM449 342h1v1h-1zM451 342h1v1h-1zM453 342h1v1h-1zM455 342h1v1h-1zM457 342h1v1h-1zM459 342h1v1h-1zM461 17h1v1h-1zM461 19h1v1h-1zM461 82h1v1h-1zM461 147h1v1h-1zM461 212h1v1h-1zM461 277h1v1h-1zM461 339h1v1h-1zM461 341h1v1h-1zM461 342h1v1h-1zM461 343h1v1h-1zM461 345h1v1h-1zM461 407h1v1h-1zM461 472h1v1h-1zM461 537h1v1h-1zM461 602h1v1h-1zM461 665h1v1h-1zM461 667h1v1h-1zM463 342h1v1h-1zM465 342h1v1h-1zM467 342h1v1h-1zM469 342h1v1h-1zM471 342h1v1h-1zM473 342h1v1h-1zM475 342h1v1h-1zM477 342h1v1h-1zM479 342h1v1h-1zM481 17h1v1h-1zM481 19h1v1h-1zM481 82h1v1h-1zM481 147h1v1h-1zM481 212h1v1h-1zM481 277h1v1h-1zM481 339h1v1h-1zM481 341h1v1h-1zM481 342h1v1h-1zM481 343h1v1h-1zM481 345h1v1h-1zM481 407h1v1h-1zM481 472h1v1h-1zM481 537h1v1h-1zM481 602h1v1h-1zM481 665h1v1h-1zM481 667h1v1h-1zM483 342h1v1h-1zM485 342h1v1h-1zM487 342h1v1h-1zM489 342h1v1h-1zM491 342h1v1h-1zM493 342h1v1h-1zM495 342h1v1h-1zM497 342h1v1h-1zM499 342h1v1h-1zM501 17h1v1h-1zM501 19h1v1h-1zM501 82h1v1h-1zM501 147h1v1h-1zM501 212h1v1h-1zM501 277h1v1h-1zM501 339h1v1h-1zM501 341h1v1h-1zM501 342h1v1h-1zM501 343h1v1h-1zM501 345h1v1h-1zM501 407h1v1h-1zM501 472h1v1h-1zM501 537h1v1h-1zM501 602h1v1h-1zM501 665h1v1h-1zM501 667h1v1h-1zM503 342h1v1h-1zM505 342h1v1h-1zM507 342h1v1h-1zM509 342h1v1h-1zM511 342h1v1h-1zM513 342h1v1h-1zM515 342h1v1h-1zM517 342h1v1h-1zM518 30h1v1h-1zM518 43h1v1h-1zM518 56h1v1h-1zM518 69h1v1h-1zM518 82h1v1h-1zM518 95h1v1h-1zM518 108h1v1h-1zM518 121h1v1h-1zM518 134h1v1h-1zM518 147h1v1h-1zM518 160h1v1h-1zM518 173h1v1h-1zM518 186h1v1h-1zM518 199h1v1h-1zM518 212h1v1h-1zM518 225h1v1h-1zM518 238h1v1h-1zM518 251h1v1h-1zM518 264h1v1h-1zM518 277h1v1h-1zM518 290h1v1h-1zM518 303h1v1h-1zM518 316h1v1h-1zM518 329h1v1h-1zM518 342h1v1h-1zM518 355h1v1h-1zM518 368h1v1h-1zM518 381h1v1h-1zM518 394h1v1h-1zM518 407h1v1h-1zM518 420h1v1h-1zM518 433h1v1h-1zM518 446h1v1h-1zM518 459h1v1h-1zM518 472h1v1h-1zM518 485h1v1h-1zM518 498h1v1h-1zM518 511h1v1h-1zM518 524h1v1h-1zM518 537h1v1h-1zM518 550h1v1h-1zM518 563h1v1h-1zM518 576h1v1h-1zM518 589h1v1h-1zM518 602h1v1h-1zM518 615h1v1h-1zM518 628h1v1h-1zM518 641h1v1h-1zM518 654h1v1h-1zM519 342h1v1h-1zM520 30h1v1h-1zM520 43h1v1h-1zM520 56h1v1h-1zM520 69h1v1h-1zM520 82h1v1h-1zM520 95h1v1h-1zM520 108h1v1h-1zM520 121h1v1h-1zM520 134h1v1h-1zM520 147h1v1h-1zM520 160h1v1h-1zM520 173h1v1h-1zM520 186h1v1h-1zM520 199h1v1h-1zM520 212h1v1h-1zM520 225h1v1h-1zM520 238h1v1h-1zM520 251h1v1h-1zM520 264h1v1h-1zM520 277h1v1h-1zM520 290h1v1h-1zM520 303h1v1h-1zM520 316h1v1h-1zM520 329h1v1h-1zM520 342h1v1h-1zM520 355h1v1h-1zM520 368h1v1h-1zM520 381h1v1h-1zM520 394h1v1h-1zM520 407h1v1h-1zM520 420h1v1h-1zM520 433h1v1h-1zM520 446h1v1h-1zM520 459h1v1h-1zM520 472h1v1h-1zM520 485h1v1h-1zM520 498h1v1h-1zM520 511h1v1h-1zM520 524h1v1h-1zM520 537h1v1h-1zM520 550h1v1h-1zM520 563h1v1h-1zM520 576h1v1h-1zM520 589h1v1h-1zM520 602h1v1h-1zM520 615h1v1h-1zM520 628h1v1h-1zM520 641h1v1h-1zM520 654h1v1h-1zM521 18h1v1h-1zM521 20h1v1h-1zM521 22h1v1h-1zM521 24h1v1h-1zM521 26h1v1h-1zM521 28h1v1h-1zM521 30h1v1h-1zM521 32h1v1h-1zM521 34h1v1h-1zM521 36h1v1h-1zM521 38h1v1h-1zM521 40h1v1h-1zM521 42h1v1h-1zM521 43h1v1h-1zM521 44h1v1h-1zM521 46h1v1h-1zM521 48h1v1h-1zM521 50h1v1h-1zM521 52h1v1h-1zM521 54h1v1h-1zM521 56h1v1h-1zM521 58h1v1h-1zM521 60h1v1h-1zM521 62h1v1h-1zM521 64h1v1h-1zM521 66h1v1h-1zM521 68h1v1h-1zM521 69h1v1h-1zM521 70h1v1h-1zM521 72h1v1h-1zM521 74h1v1h-1zM521 76h1v1h-1zM521 78h1v1h-1zM521 80h1v1h-1zM521 82h1v1h-1zM521 84h1v1h-1zM521 86h1v1h-1zM521 88h1v1h-1zM521 90h1v1h-1zM521 92h1v1h-1zM521 94h1v1h-1zM521 95h1v1h-1zM521 96h1v1h-1zM521 98h1v1h-1zM521 100h1v1h-1zM521 102h1v1h-1zM521 104h1v1h-1zM521 106h1v1h-1zM521 108h1v1h-1zM521 110h1v1h-1zM521 112h1v1h-1zM521 114h1v1h-1zM521 116h1v1h-1zM521 118h1v1h-1zM521 120h1v1h-1zM521 121h1v1h-1zM521 122h1v1h-1zM521 124h1v1h-1zM521 126h1v1h-1zM521 128h1v1h-1zM521 130h1v1h-1zM521 132h1v1h-1zM521 134h1v1h-1zM521 136h1v1h-1zM521 138h1v1h-1zM521 140h1v1h-1zM521 142h1v1h-1zM521 144h1v1h-1zM521 146h1v1h-1zM521 147h1v1h-1zM521 148h1v1h-1zM521 150h1v1h-1zM521 152h1v1h-1zM521 154h1v1h-1zM521 156h1v1h-1zM521 158h1v1h-1zM521 160h1v1h-1zM521 162h1v1h-1zM521 164h1v1h-1zM521 166h1v1h-1zM521 168h1v1h-1zM521 170h1v1h-1zM521 172h1v1h-1zM521 173h1v1h-1zM521 174h1v1h-1zM521 176h1v1h-1zM521 178h1v1h-1zM521 180h1v1h-1zM521 182h1v1h-1zM521 184h1v1h-1zM521 186h1v1h-1zM521 188h1v1h-1zM521 190h1v1h-1zM521 192h1v1h-1zM521 194h1v1h-1zM521 196h1v1h-1zM521 198h1v1h-1zM521 199h1v1h-1zM521 200h1v1h-1zM521 202h1v1h-1zM521 204h1v1h-1zM521 206h1v1h-1zM521 208h1v1h-1zM521 210h1v1h-1zM521 212h1v1h-1zM521 214h1v1h-1zM521 216h1v1h-1zM521 218h1v1h-1zM521 220h1v1h-1zM521 222h1v1h-1zM521 224h1v1h-1zM521 225h1v1h-1zM521 226h1v1h-1zM521 228h1v1h-1zM521 230h1v1h-1zM521 232h1v1h-1zM521 234h1v1h-1zM521 236h1v1h-1zM521 238h1v1h-1zM521 240h1v1h-1zM521 242h1v1h-1zM521 244h1v1h-1zM521 246h1v1h-1zM521 248h1v1h-1zM521 250h1v1h-1zM521 251h1v1h-1zM521 252h1v1h-1zM521 254h1v1h-1zM521 256h1v1h-1zM521 258h1v1h-1zM521 260h1v1h-1zM521 262h1v1h-1zM521 264h1v1h-1zM521 266h1v1h-1zM521 268h1v1h-1zM521 270h1v1h-1zM521 272h1v1h-1zM521 274h1v1h-1zM521 276h1v1h-1zM521 277h1v1h-1zM521 278h1v1h-1zM521 280h1v1h-1zM521 282h1v1h-1zM521 284h1v1h-1zM521 286h1v1h-1zM521 288h1v1h-1zM521 290h1v1h-1zM521 292h1v1h-1zM521 294h1v1h-1zM521 296h1v1h-1zM521 298h1v1h-1zM521 300h1v1h-1zM521 302h1v1h-1zM521 303h1v1h-1zM521 304h1v1h-1zM521 306h1v1h-1zM521 308h1v1h-1zM521 310h1v1h-1zM521 312h1v1h-1zM521 314h1v1h-1zM521 316h1v1h-1zM521 318h1v1h-1zM521 320h1v1h-1zM521 322h1v1h-1zM521 324h1v1h-1zM521 326h1v1h-1zM521 328h1v1h-1zM521 329h1v1h-1zM521 330h1v1h-1zM521 332h1v1h-1zM521 334h1v1h-1zM521 336h1v1h-1zM521 338h1v1h-1zM521 339h1v1h-1zM521 340h1v1h-1zM521 341h1v1h-1zM521 342h1v1h-1zM521 343h1v1h-1zM521 344h1v1h-1zM521 345h1v1h-1zM521 346h1v1h-1zM521 348h1v1h-1zM521 350h1v1h-1zM521 352h1v1h-1zM521 354h1v1h-1zM521 355h1v1h-1zM521 356h1v1h-1zM521 358h1v1h-1zM521 360h1v1h-1zM521 362h1v1h-1zM521 364h1v1h-1zM521 366h1v1h-1zM521 368h1v1h-1zM521 370h1v1h-1zM521 372h1v1h-1zM521 374h1v1h-1zM521 376h1v1h-1zM521 378h1v1h-1zM521 380h1v1h-1zM521 381h1v1h-1zM521 382h1v1h-1zM521 384h1v1h-1zM521 386h1v1h-1zM521 388h1v1h-1zM521 390h1v1h-1zM521 392h1v1h-1zM521 394h1v1h-1zM521 396h1v1h-1zM521 398h1v1h-1zM521 400h1v1h-1zM521 402h1v1h-1zM521 404h1v1h-1zM521 406h1v1h-1zM521 407h1v1h-1zM521 408h1v1h-1zM521 410h1v1h-1zM521 412h1v1h-1zM521 414h1v1h-1zM521 416h1v1h-1zM521 418h1v1h-1zM521 420h1v1h-1zM521 422h1v1h-1zM521 424h1v1h-1zM521 426h1v1h-1zM521 428h1v1h-1zM521 430h1v1h-1zM521 432h1v1h-1zM521 433h1v1h-1zM521 434h1v1h-1zM521 436h1v1h-1zM521 438h1v1h-1zM521 440h1v1h-1zM521 442h1v1h-1zM521 444h1v1h-1zM521 446h1v1h-1zM521 448h1v1h-1zM521 450h1v1h-1zM521 452h1v1h-1zM521 454h1v1h-1zM521 456h1v1h-1zM521 458h1v1h-1zM521 459h1v1h-1zM521 460h1v1h-1zM521 462h1v1h-1zM521 464h1v1h-1zM521 466h1v1h-1zM521 468h1v1h-1zM521 470h1v1h-1zM521 472h1v1h-1zM521 474h1v1h-1zM521 476h1v1h-1zM521 478h1v1h-1zM521 480h1v1h-1zM521 482h1v1h-1zM521 484h1v1h-1zM521 485h1v1h-1zM521 486h1v1h-1zM521 488h1v1h-1zM521 490h1v1h-1zM521 492h1v1h-1zM521 494h1v1h-1zM521 496h1v1h-1zM521 498h1v1h-1zM521 500h1v1h-1zM521 502h1v1h-1zM521 504h1v1h-1zM521 506h1v1h-1zM521 508h1v1h-1zM521 510h1v1h-1zM521 511h1v1h-1zM521 512h1v1h-1zM521 514h1v1h-1zM521 516h1v1h-1zM521 518h1v1h-1zM521 520h1v1h-1zM521 522h1v1h-1zM521 524h1v1h-1zM521 526h1v1h-1zM521 528h1v1h-1zM521 530h1v1h-1zM521 532h1v1h-1zM521 534h1v1h-1zM521 536h1v1h-1zM521 537h1v1h-1zM521 538h1v1h-1zM521 540h1v1h-1zM521 542h1v1h-1zM521 544h1v1h-1zM521 546h1v1h-1zM521 548h1v1h-1zM521 550h1v1h-1zM521 552h1v1h-1zM521 554h1v1h-1zM521 556h1v1h-1zM521 558h1v1h-1zM521 560h1v1h-1zM521 562h1v1h-1zM521 563h1v1h-1zM521 564h1v1h-1zM521 566h1v1h-1zM521 568h1v1h-1zM521 570h1v1h-1zM521 572h1v1h-1zM521 574h1v1h-1zM521 576h1v1h-1zM521 578h1v1h-1zM521 580h1v1h-1zM521 582h1v1h-1zM521 584h1v1h-1zM521 586h1v1h-1zM521 588h1v1h-1zM521 589h1v1h-1zM521 590h1v1h-1zM521 592h1v1h-1zM521 594h1v1h-1zM521 596h1v1h-1zM521 598h1v1h-1zM521 600h1v1h-1zM521 602h1v1h-1zM521 604h1v1h-1zM521 606h1v1h-1zM521 608h1v1h-1zM521 610h1v1h-1zM521 612h1v1h-1zM521 614h1v1h-1zM521 615h1v1h-1zM521 616h1v1h-1zM521 618h1v1h-1zM521 620h1v1h-1zM521 622h1v1h-1zM521 624h1v1h-1zM521 626h1v1h-1zM521 628h1v1h-1zM521 630h1v1h-1zM521 632h1v1h-1zM521 634h1v1h-1zM521 636h1v1h-1zM521 638h1v1h-1zM521 640h1v1h-1zM521 641h1v1h-1zM521 642h1v1h-1zM521 644h1v1h-1zM521 646h1v1h-1zM521 648h1v1h-1zM521 650h1v1h-1zM521 652h1v1h-1zM521 654h1v1h-1zM521 656h1v1h-1zM521 658h1v1h-1zM521 660h1v1h-1zM521 662h1v1h-1zM521 663h1v1h-1zM521 664h1v1h-1zM521 665h1v1h-1zM521 666h1v1h-1zM521 667h1v1h-1zM522 30h1v1h-1zM522 43h1v1h-1zM522 56h1v1h-1zM522 69h1v1h-1zM522 82h1v1h-1zM522 95h1v1h-1zM522 108h1v1h-1zM522 121h1v1h-1zM522 134h1v1h-1zM522 147h1v1h-1zM522 160h1v1h-1zM522 173h1v1h-1zM522 186h1v1h-1zM522 199h1v1h-1zM522 212h1v1h-1zM522 225h1v1h-1zM522 238h1v1h-1zM522 251h1v1h-1zM522 264h1v1h-1zM522 277h1v1h-1zM522 290h1v1h-1zM522 303h1v1h-1zM522 316h1v1h-1zM522 329h1v1h-1zM522 342h1v1h-1zM522 355h1v1h-1zM522 368h1v1h-1zM522 381h1v1h-1zM522 394h1v1h-1zM522 407h1v1h-1zM522 420h1v1h-1zM522 433h1v1h-1zM522 446h1v1h-1zM522 459h1v1h-1zM522 472h1v1h-1zM522 485h1v1h-1zM522 498h1v1h-1zM522 511h1v1h-1zM522 524h1v1h-1zM522 537h1v1h-1zM522 550h1v1h-1zM522 563h1v1h-1zM522 576h1v1h-1zM522 589h1v1h-1zM522 602h1v1h-1zM522 615h1v1h-1zM522 628h1v1h-1zM522 641h1v1h-1zM522 654h1v1h-1zM523 342h1v1h-1zM524 30h1v1h-1zM524 43h1v1h-1zM524 56h1v1h-1zM524 69h1v1h-1zM524 82h1v1h-1zM524 95h1v1h-1zM524 108h1v1h-1zM524 121h1v1h-1zM524 134h1v1h-1zM524 147h1v1h-1zM524 160h1v1h-1zM524 173h1v1h-1zM524 186h1v1h-1zM524 199h1v1h-1zM524 212h1v1h-1zM524 225h1v1h-1zM524 238h1v1h-1zM524 251h1v1h-1zM524 264h1v1h-1zM524 277h1v1h-1zM524 290h1v1h-1zM524 303h1v1h-1zM524 316h1v1h-1zM524 329h1v1h-1zM524 342h1v1h-1zM524 355h1v1h-1zM524 368h1v1h-1zM524 381h1v1h-1zM524 394h1v1h-1zM524 407h1v1h-1zM524 420h1v1h-1zM524 433h1v1h-1zM524 446h1v1h-1zM524 459h1v1h-1zM524 472h1v1h-1zM524 485h1v1h-1zM524 498h1v1h-1zM524 511h1v1h-1zM524 524h1v1h-1zM524 537h1v1h-1zM524 550h1v1h-1zM524 563h1v1h-1zM524 576h1v1h-1zM524 589h1v1h-1zM524 602h1v1h-1zM524 615h1v1h-1zM524 628h1v1h-1zM524 641h1v1h-1zM524 654h1v1h-1zM525 342h1v1h-1zM527 342h1v1h-1zM529 342h1v1h-1zM531 342h1v1h-1zM533 342h1v1h-1zM535 342h1v1h-1zM537 342h1v1h-1zM539 342h1v1h-1zM541 17h1v1h-1zM541 19h1v1h-1zM541 82h1v1h-1zM541 147h1v1h-1zM541 212h1v1h-1zM541 277h1v1h-1zM541 339h1v1h-1zM541 341h1v1h-1zM541 342h1v1h-1zM541 343h1v1h-1zM541 345h1v1h-1zM541 407h1v1h-1zM541 472h1v1h-1zM541 537h1v1h-1zM541 602h1v1h-1zM541 665h1v1h-1zM541 667h1v1h-1zM543 342h1v1h-1zM545 342h1v1h-1zM547 342h1v1h-1zM549 342h1v1h-1zM551 342h1v1h-1zM553 342h1v1h-1zM555 342h1v1h-1zM557 342h1v1h-1zM559 342h1v1h-1zM561 17h1v1h-1zM561 19h1v1h-1zM561 82h1v1h-1zM561 147h1v1h-1zM561 212h1v1h-1zM561 277h1v1h-1zM561 339h1v1h-1zM561 341h1v1h-1zM561 342h1v1h-1zM561 343h1v1h-1zM561 345h1v1h-1zM561 407h1v1h-1zM561 472h1v1h-1zM561 537h1v1h-1zM561 602h1v1h-1zM561 665h1v1h-1zM561 667h1v1h-1zM563 342h1v1h-1zM565 342h1v1h-1zM567 342h1v1h-1zM569 342h1v1h-1zM571 342h1v1h-1zM573 342h1v1h-1zM575 342h1v1h-1zM577 342h1v1h-1zM579 342h1v1h-1zM581 17h1v1h-1zM581 19h1v1h-1zM581 82h1v1h-1zM581 147h1v1h-1zM581 212h1v1h-1zM581 277h1v1h-1zM581 339h1v1h-1zM581 341h1v1h-1zM581 342h1v1h-1zM581 343h1v1h-1zM581 345h1v1h-1zM581 407h1v1h-1zM581 472h1v1h-1zM581 537h1v1h-1zM581 602h1v1h-1zM581 665h1v1h-1zM581 667h1v1h-1zM583 342h1v1h-1zM585 342h1v1h-1zM587 342h1v1h-1zM589 342h1v1h-1zM591 342h1v1h-1zM593 342h1v1h-1zM595 342h1v1h-1zM597 342h1v1h-1zM599 342h1v1h-1zM601 17h1v1h-1zM601 19h1v1h-1zM601 82h1v1h-1zM601 147h1v1h-1zM601 212h1v1h-1zM601 277h1v1h-1zM601 339h1v1h-1zM601 341h1v1h-1zM601 342h1v1h-1zM601 343h1v1h-1zM601 345h1v1h-1zM601 407h1v1h-1zM601 472h1v1h-1zM601 537h1v1h-1zM601 602h1v1h-1zM601 665h1v1h-1zM601 667h1v1h-1zM603 342h1v1h-1zM605 342h1v1h-1zM607 342h1v1h-1zM609 342h1v1h-1zM611 342h1v1h-1zM613 342h1v1h-1zM615 342h1v1h-1zM617 342h1v1h-1zM619 342h1v1h-1zM621 18h1v1h-1zM621 20h1v1h-1zM621 22h1v1h-1zM621 30h1v1h-1zM621 43h1v1h-1zM621 56h1v1h-1zM621 69h1v1h-1zM621 82h1v1h-1zM621 95h1v1h-1zM621 108h1v1h-1zM621 121h1v1h-1zM621 134h1v1h-1zM621 147h1v1h-1zM621 160h1v1h-1zM621 173h1v1h-1zM621 186h1v1h-1zM621 199h1v1h-1zM621 212h1v1h-1zM621 225h1v1h-1zM621 238h1v1h-1zM621 251h1v1h-1zM621 264h1v1h-1zM621 277h1v1h-1zM621 290h1v1h-1zM621 303h1v1h-1zM621 316h1v1h-1zM621 329h1v1h-1zM621 339h1v1h-1zM621 341h1v1h-1zM621 342h1v1h-1zM621 343h1v1h-1zM621 345h1v1h-1zM621 355h1v1h-1zM621 368h1v1h-1zM621 381h1v1h-1zM621 394h1v1h-1zM621 407h1v1h-1zM621 420h1v1h-1zM621 433h1v1h-1zM621 446h1v1h-1zM621 459h1v1h-1zM621 472h1v1h-1zM621 485h1v1h-1zM621 498h1v1h-1zM621 511h1v1h-1zM621 524h1v1h-1zM621 537h1v1h-1zM621 550h1v1h-1zM621 563h1v1h-1zM621 576h1v1h-1zM621 589h1v1h-1zM621 602h1v1h-1zM621 615h1v1h-1zM621 628h1v1h-1zM621 641h1v1h-1zM621 654h1v1h-1zM621 663h1v1h-1zM621 665h1v1h-1zM621 667h1v1h-1zM623 342h1v1h-1zM625 342h1v1h-1zM627 342h1v1h-1zM629 342h1v1h-1zM631 342h1v1h-1zM633 342h1v1h-1zM635 342h1v1h-1zM637 342h1v1h-1zM639 342h1v1h-1zM641 17h1v1h-1zM641 19h1v1h-1zM641 82h1v1h-1zM641 147h1v1h-1zM641 212h1v1h-1zM641 277h1v1h-1zM641 339h1v1h-1zM641 341h1v1h-1zM641 342h1v1h-1zM641 343h1v1h-1zM641 345h1v1h-1zM641 407h1v1h-1zM641 472h1v1h-1zM641 537h1v1h-1zM641 602h1v1h-1zM641 665h1v1h-1zM641 667h1v1h-1zM643 342h1v1h-1zM645 342h1v1h-1zM647 342h1v1h-1zM649 342h1v1h-1zM651 342h1v1h-1zM653 342h1v1h-1zM655 342h1v1h-1zM657 342h1v1h-1zM659 342h1v1h-1zM661 17h1v1h-1zM661 19h1v1h-1zM661 82h1v1h-1zM661 147h1v1h-1zM661 212h1v1h-1zM661 277h1v1h-1zM661 339h1v1h-1zM661 341h1v1h-1zM661 342h1v1h-1zM661 343h1v1h-1zM661 345h1v1h-1zM661 407h1v1h-1zM661 472h1v1h-1zM661 537h1v1h-1zM661 602h1v1h-1zM661 665h1v1h-1zM661 667h1v1h-1zM663 342h1v1h-1zM665 342h1v1h-1zM667 342h1v1h-1zM669 342h1v1h-1zM671 342h1v1h-1zM673 342h1v1h-1zM675 342h1v1h-1zM677 342h1v1h-1zM679 342h1v1h-1zM681 17h1v1h-1zM681 19h1v1h-1zM681 82h1v1h-1zM681 147h1v1h-1zM681 212h1v1h-1zM681 277h1v1h-1zM681 339h1v1h-1zM681 341h1v1h-1zM681 342h1v1h-1zM681 343h1v1h-1zM681 345h1v1h-1zM681 407h1v1h-1zM681 472h1v1h-1zM681 537h1v1h-1zM681 602h1v1h-1zM681 665h1v1h-1zM681 667h1v1h-1zM683 342h1v1h-1zM685 342h1v1h-1zM687 342h1v1h-1zM689 342h1v1h-1zM691 342h1v1h-1zM693 342h1v1h-1zM695 342h1v1h-1zM697 342h1v1h-1zM699 342h1v1h-1zM701 17h1v1h-1zM701 19h1v1h-1zM701 82h1v1h-1zM701 147h1v1h-1zM701 212h1v1h-1zM701 277h1v1h-1zM701 339h1v1h-1zM701 341h1v1h-1zM701 342h1v1h-1zM701 343h1v1h-1zM701 345h1v1h-1zM701 407h1v1h-1zM701 472h1v1h-1zM701 537h1v1h-1zM701 602h1v1h-1zM701 665h1v1h-1zM701 667h1v1h-1zM703 342h1v1h-1zM705 342h1v1h-1zM707 342h1v1h-1zM709 342h1v1h-1zM711 342h1v1h-1zM713 342h1v1h-1zM715 342h1v1h-1zM717 342h1v1h-1zM719 342h1v1h-1zM721 18h1v1h-1zM721 20h1v1h-1zM721 22h1v1h-1zM721 30h1v1h-1zM721 43h1v1h-1zM721 56h1v1h-1zM721 69h1v1h-1zM721 82h1v1h-1zM721 95h1v1h-1zM721 108h1v1h-1zM721 121h1v1h-1zM721 134h1v1h-1zM721 147h1v1h-1zM721 160h1v1h-1zM721 173h1v1h-1zM721 186h1v1h-1zM721 199h1v1h-1zM721 212h1v1h-1zM721 225h1v1h-1zM721 238h1v1h-1zM721 251h1v1h-1zM721 264h1v1h-1zM721 277h1v1h-1zM721 290h1v1h-1zM721 303h1v1h-1zM721 316h1v1h-1zM721 329h1v1h-1zM721 339h1v1h-1zM721 341h1v1h-1zM721 342h1v1h-1zM721 343h1v1h-1zM721 345h1v1h-1zM721 355h1v1h-1zM721 368h1v1h-1zM721 381h1v1h-1zM721 394h1v1h-1zM721 407h1v1h-1zM721 420h1v1h-1zM721 433h1v1h-1zM721 446h1v1h-1zM721 459h1v1h-1zM721 472h1v1h-1zM721 485h1v1h-1zM721 498h1v1h-1zM721 511h1v1h-1zM721 524h1v1h-1zM721 537h1v1h-1zM721 550h1v1h-1zM721 563h1v1h-1zM721 576h1v1h-1zM721 589h1v1h-1zM721 602h1v1h-1zM721 615h1v1h-1zM721 628h1v1h-1zM721 641h1v1h-1zM721 654h1v1h-1zM721 663h1v1h-1zM721 665h1v1h-1zM721 667h1v1h-1zM723 342h1v1h-1zM725 342h1v1h-1zM727 342h1v1h-1zM729 342h1v1h-1zM731 342h1v1h-1zM733 342h1v1h-1zM735 342h1v1h-1zM737 342h1v1h-1zM739 342h1v1h-1zM741 17h1v1h-1zM741 19h1v1h-1zM741 82h1v1h-1zM741 147h1v1h-1zM741 212h1v1h-1zM741 277h1v1h-1zM741 339h1v1h-1zM741 341h1v1h-1zM741 342h1v1h-1zM741 343h1v1h-1zM741 345h1v1h-1zM741 407h1v1h-1zM741 472h1v1h-1zM741 537h1v1h-1zM741 602h1v1h-1zM741 665h1v1h-1zM741 667h1v1h-1zM743 342h1v1h-1zM745 342h1v1h-1zM747 342h1v1h-1zM749 342h1v1h-1zM751 342h1v1h-1zM753 342h1v1h-1zM755 342h1v1h-1zM757 342h1v1h-1zM759 342h1v1h-1zM761 17h1v1h-1zM761 19h1v1h-1zM761 82h1v1h-1zM761 147h1v1h-1zM761 212h1v1h-1zM761 277h1v1h-1zM761 339h1v1h-1zM761 341h1v1h-1zM761 342h1v1h-1zM761 343h1v1h-1zM761 345h1v1h-1zM761 407h1v1h-1zM761 472h1v1h-1zM761 537h1v1h-1zM761 602h1v1h-1zM761 665h1v1h-1zM761 667h1v1h-1zM763 342h1v1h-1zM765 342h1v1h-1zM767 342h1v1h-1zM769 342h1v1h-1zM771 342h1v1h-1zM773 342h1v1h-1zM775 342h1v1h-1zM777 342h1v1h-1zM779 342h1v1h-1zM781 17h1v1h-1zM781 19h1v1h-1zM781 82h1v1h-1zM781 147h1v1h-1zM781 212h1v1h-1zM781 277h1v1h-1zM781 339h1v1h-1zM781 341h1v1h-1zM781 342h1v1h-1zM781 343h1v1h-1zM781 345h1v1h-1zM781 407h1v1h-1zM781 472h1v1h-1zM781 537h1v1h-1zM781 602h1v1h-1zM781 665h1v1h-1zM781 667h1v1h-1zM783 342h1v1h-1zM785 342h1v1h-1zM787 342h1v1h-1zM789 342h1v1h-1zM791 342h1v1h-1zM793 342h1v1h-1zM795 342h1v1h-1zM797 342h1v1h-1zM799 342h1v1h-1zM801 17h1v1h-1zM801 19h1v1h-1zM801 82h1v1h-1zM801 147h1v1h-1zM801 212h1v1h-1zM801 277h1v1h-1zM801 339h1v1h-1zM801 341h1v1h-1zM801 342h1v1h-1zM801 343h1v1h-1zM801 345h1v1h-1zM801 407h1v1h-1zM801 472h1v1h-1zM801 537h1v1h-1zM801 602h1v1h-1zM801 665h1v1h-1zM801 667h1v1h-1zM803 342h1v1h-1zM805 342h1v1h-1zM807 342h1v1h-1zM809 342h1v1h-1zM811 342h1v1h-1zM813 342h1v1h-1zM815 342h1v1h-1zM817 342h1v1h-1zM819 342h1v1h-1zM821 18h1v1h-1zM821 20h1v1h-1zM821 22h1v1h-1zM821 30h1v1h-1zM821 43h1v1h-1zM821 56h1v1h-1zM821 69h1v1h-1zM821 82h1v1h-1zM821 95h1v1h-1zM821 108h1v1h-1zM821 121h1v1h-1zM821 134h1v1h-1zM821 147h1v1h-1zM821 160h1v1h-1zM821 173h1v1h-1zM821 186h1v1h-1zM821 199h1v1h-1zM821 212h1v1h-1zM821 225h1v1h-1zM821 238h1v1h-1zM821 251h1v1h-1zM821 264h1v1h-1zM821 277h1v1h-1zM821 290h1v1h-1zM821 303h1v1h-1zM821 316h1v1h-1zM821 329h1v1h-1zM821 339h1v1h-1zM821 341h1v1h-1zM821 342h1v1h-1zM821 343h1v1h-1zM821 345h1v1h-1zM821 355h1v1h-1zM821 368h1v1h-1zM821 381h1v1h-1zM821 394h1v1h-1zM821 407h1v1h-1zM821 420h1v1h-1zM821 433h1v1h-1zM821 446h1v1h-1zM821 459h1v1h-1zM821 472h1v1h-1zM821 485h1v1h-1zM821 498h1v1h-1zM821 511h1v1h-1zM821 524h1v1h-1zM821 537h1v1h-1zM821 550h1v1h-1zM821 563h1v1h-1zM821 576h1v1h-1zM821 589h1v1h-1zM821 602h1v1h-1zM821 615h1v1h-1zM821 628h1v1h-1zM821 641h1v1h-1zM821 654h1v1h-1zM821 663h1v1h-1zM821 665h1v1h-1zM821 667h1v1h-1zM823 342h1v1h-1zM825 342h1v1h-1zM827 342h1v1h-1zM829 342h1v1h-1zM831 342h1v1h-1zM833 342h1v1h-1zM835 342h1v1h-1zM837 342h1v1h-1zM839 342h1v1h-1zM841 17h1v1h-1zM841 19h1v1h-1zM841 82h1v1h-1zM841 147h1v1h-1zM841 212h1v1h-1zM841 277h1v1h-1zM841 339h1v1h-1zM841 341h1v1h-1zM841 342h1v1h-1zM841 343h1v1h-1zM841 345h1v1h-1zM841 407h1v1h-1zM841 472h1v1h-1zM841 537h1v1h-1zM841 602h1v1h-1zM841 665h1v1h-1zM841 667h1v1h-1zM843 342h1v1h-1zM845 342h1v1h-1zM847 342h1v1h-1zM849 342h1v1h-1zM851 342h1v1h-1zM853 342h1v1h-1zM855 342h1v1h-1zM857 342h1v1h-1zM859 342h1v1h-1zM861 17h1v1h-1zM861 19h1v1h-1zM861 82h1v1h-1zM861 147h1v1h-1zM861 212h1v1h-1zM861 277h1v1h-1zM861 339h1v1h-1zM861 341h1v1h-1zM861 342h1v1h-1zM861 343h1v1h-1zM861 345h1v1h-1zM861 407h1v1h-1zM861 472h1v1h-1zM861 537h1v1h-1zM861 602h1v1h-1zM861 665h1v1h-1zM861 667h1v1h-1zM863 342h1v1h-1zM865 342h1v1h-1zM867 342h1v1h-1zM869 342h1v1h-1zM871 342h1v1h-1zM873 342h1v1h-1zM875 342h1v1h-1zM877 342h1v1h-1zM879 342h1v1h-1zM881 17h1v1h-1zM881 19h1v1h-1zM881 82h1v1h-1zM881 147h1v1h-1zM881 212h1v1h-1zM881 277h1v1h-1zM881 339h1v1h-1zM881 341h1v1h-1zM881 342h1v1h-1zM881 343h1v1h-1zM881 345h1v1h-1zM881 407h1v1h-1zM881 472h1v1h-1zM881 537h1v1h-1zM881 602h1v1h-1zM881 665h1v1h-1zM881 667h1v1h-1zM883 342h1v1h-1zM885 342h1v1h-1zM887 342h1v1h-1zM889 342h1v1h-1zM891 342h1v1h-1zM893 342h1v1h-1zM895 342h1v1h-1zM897 342h1v1h-1zM899 342h1v1h-1zM901 17h1v1h-1zM901 19h1v1h-1zM901 82h1v1h-1zM901 147h1v1h-1zM901 212h1v1h-1zM901 277h1v1h-1zM901 339h1v1h-1zM901 341h1v1h-1zM901 342h1v1h-1zM901 343h1v1h-1zM901 345h1v1h-1zM901 407h1v1h-1zM901 472h1v1h-1zM901 537h1v1h-1zM901 602h1v1h-1zM901 665h1v1h-1zM901 667h1v1h-1zM903 342h1v1h-1zM905 342h1v1h-1zM907 342h1v1h-1zM909 342h1v1h-1zM911 342h1v1h-1zM913 342h1v1h-1zM915 342h1v1h-1zM917 342h1v1h-1zM919 342h1v1h-1zM921 18h1v1h-1zM921 20h1v1h-1zM921 22h1v1h-1zM921 30h1v1h-1zM921 43h1v1h-1zM921 56h1v1h-1zM921 69h1v1h-1zM921 82h1v1h-1zM921 95h1v1h-1zM921 108h1v1h-1zM921 121h1v1h-1zM921 134h1v1h-1zM921 147h1v1h-1zM921 160h1v1h-1zM921 173h1v1h-1zM921 186h1v1h-1zM921 199h1v1h-1zM921 212h1v1h-1zM921 225h1v1h-1zM921 238h1v1h-1zM921 251h1v1h-1zM921 264h1v1h-1zM921 277h1v1h-1zM921 290h1v1h-1zM921 303h1v1h-1zM921 316h1v1h-1zM921 329h1v1h-1zM921 339h1v1h-1zM921 341h1v1h-1zM921 342h1v1h-1zM921 343h1v1h-1zM921 345h1v1h-1zM921 355h1v1h-1zM921 368h1v1h-1zM921 381h1v1h-1zM921 394h1v1h-1zM921 407h1v1h-1zM921 420h1v1h-1zM921 433h1v1h-1zM921 446h1v1h-1zM921 459h1v1h-1zM921 472h1v1h-1zM921 485h1v1h-1zM921 498h1v1h-1zM921 511h1v1h-1zM921 524h1v1h-1zM921 537h1v1h-1zM921 550h1v1h-1zM921 563h1v1h-1zM921 576h1v1h-1zM921 589h1v1h-1zM921 602h1v1h-1zM921 615h1v1h-1zM921 628h1v1h-1zM921 641h1v1h-1zM921 654h1v1h-1zM921 663h1v1h-1zM921 665h1v1h-1zM921 667h1v1h-1zM923 342h1v1h-1zM925 342h1v1h-1zM927 342h1v1h-1zM929 342h1v1h-1zM931 342h1v1h-1zM933 342h1v1h-1zM935 342h1v1h-1zM937 342h1v1h-1zM939 342h1v1h-1zM941 17h1v1h-1zM941 19h1v1h-1zM941 82h1v1h-1zM941 147h1v1h-1zM941 212h1v1h-1zM941 277h1v1h-1zM941 339h1v1h-1zM941 341h1v1h-1zM941 342h1v1h-1zM941 343h1v1h-1zM941 345h1v1h-1zM941 407h1v1h-1zM941 472h1v1h-1zM941 537h1v1h-1zM941 602h1v1h-1zM941 665h1v1h-1zM941 667h1v1h-1zM943 342h1v1h-1zM945 342h1v1h-1zM947 342h1v1h-1zM949 342h1v1h-1zM951 342h1v1h-1zM953 342h1v1h-1zM955 342h1v1h-1zM957 342h1v1h-1zM959 342h1v1h-1zM961 17h1v1h-1zM961 19h1v1h-1zM961 82h1v1h-1zM961 147h1v1h-1zM961 212h1v1h-1zM961 277h1v1h-1zM961 339h1v1h-1zM961 341h1v1h-1zM961 342h1v1h-1zM961 343h1v1h-1zM961 345h1v1h-1zM961 407h1v1h-1zM961 472h1v1h-1zM961 537h1v1h-1zM961 602h1v1h-1zM961 665h1v1h-1zM961 667h1v1h-1zM963 342h1v1h-1zM965 342h1v1h-1zM967 342h1v1h-1zM969 342h1v1h-1zM971 342h1v1h-1zM973 342h1v1h-1zM975 342h1v1h-1zM977 342h1v1h-1zM979 342h1v1h-1zM981 17h1v1h-1zM981 19h1v1h-1zM981 82h1v1h-1zM981 147h1v1h-1zM981 212h1v1h-1zM981 277h1v1h-1zM981 339h1v1h-1zM981 341h1v1h-1zM981 342h1v1h-1zM981 343h1v1h-1zM981 345h1v1h-1zM981 407h1v1h-1zM981 472h1v1h-1zM981 537h1v1h-1zM981 602h1v1h-1zM981 665h1v1h-1zM981 667h1v1h-1zM983 342h1v1h-1zM985 342h1v1h-1zM987 342h1v1h-1zM989 342h1v1h-1zM991 342h1v1h-1zM993 342h1v1h-1zM995 342h1v1h-1zM997 342h1v1h-1zM999 342h1v1h-1zM1001 17h1v1h-1zM1001 19h1v1h-1zM1001 82h1v1h-1zM1001 147h1v1h-1zM1001 212h1v1h-1zM1001 277h1v1h-1zM1001 339h1v1h-1zM1001 341h1v1h-1zM1001 342h1v1h-1zM1001 343h1v1h-1zM1001 345h1v1h-1zM1001 407h1v1h-1zM1001 472h1v1h-1zM1001 537h1v1h-1zM1001 602h1v1h-1zM1001 665h1v1h-1zM1001 667h1v1h-1zM1003 342h1v1h-1zM1005 342h1v1h-1zM1007 342h1v1h-1zM1009 342h1v1h-1zM1011 342h1v1h-1zM1013 342h1v1h-1zM1015 342h1v1h-1zM1016 82h1v1h-1zM1016 147h1v1h-1zM1016 212h1v1h-1zM1016 277h1v1h-1zM1016 407h1v1h-1zM1016 472h1v1h-1zM1016 537h1v1h-1zM1016 602h1v1h-1zM1017 342h1v1h-1zM1018 30h1v1h-1zM1018 43h1v1h-1zM1018 56h1v1h-1zM1018 69h1v1h-1zM1018 82h1v1h-1zM1018 95h1v1h-1zM1018 108h1v1h-1zM1018 121h1v1h-1zM1018 134h1v1h-1zM1018 147h1v1h-1zM1018 160h1v1h-1zM1018 173h1v1h-1zM1018 186h1v1h-1zM1018 199h1v1h-1zM1018 212h1v1h-1zM1018 225h1v1h-1zM1018 238h1v1h-1zM1018 251h1v1h-1zM1018 264h1v1h-1zM1018 277h1v1h-1zM1018 290h1v1h-1zM1018 303h1v1h-1zM1018 316h1v1h-1zM1018 329h1v1h-1zM1018 355h1v1h-1zM1018 368h1v1h-1zM1018 381h1v1h-1zM1018 394h1v1h-1zM1018 407h1v1h-1zM1018 420h1v1h-1zM1018 433h1v1h-1zM1018 446h1v1h-1zM1018 459h1v1h-1zM1018 472h1v1h-1zM1018 485h1v1h-1zM1018 498h1v1h-1zM1018 511h1v1h-1zM1018 524h1v1h-1zM1018 537h1v1h-1zM1018 550h1v1h-1zM1018 563h1v1h-1zM1018 576h1v1h-1zM1018 589h1v1h-1zM1018 602h1v1h-1zM1018 615h1v1h-1zM1018 628h1v1h-1zM1018 641h1v1h-1zM1018 654h1v1h-1zM1019 342h1v1h-1zM1020 30h1v1h-1zM1020 43h1v1h-1zM1020 56h1v1h-1zM1020 69h1v1h-1zM1020 82h1v1h-1zM1020 95h1v1h-1zM1020 108h1v1h-1zM1020 121h1v1h-1zM1020 134h1v1h-1zM1020 147h1v1h-1zM1020 160h1v1h-1zM1020 173h1v1h-1zM1020 186h1v1h-1zM1020 199h1v1h-1zM1020 212h1v1h-1zM1020 225h1v1h-1zM1020 238h1v1h-1zM1020 251h1v1h-1zM1020 264h1v1h-1zM1020 277h1v1h-1zM1020 290h1v1h-1zM1020 303h1v1h-1zM1020 316h1v1h-1zM1020 329h1v1h-1zM1020 355h1v1h-1zM1020 368h1v1h-1zM1020 381h1v1h-1zM1020 394h1v1h-1zM1020 407h1v1h-1zM1020 420h1v1h-1zM1020 433h1v1h-1zM1020 446h1v1h-1zM1020 459h1v1h-1zM1020 472h1v1h-1zM1020 485h1v1h-1zM1020 498h1v1h-1zM1020 511h1v1h-1zM1020 524h1v1h-1zM1020 537h1v1h-1zM1020 550h1v1h-1zM1020 563h1v1h-1zM1020 576h1v1h-1zM1020 589h1v1h-1zM1020 602h1v1h-1zM1020 615h1v1h-1zM1020 628h1v1h-1zM1020 641h1v1h-1zM1020 654h1v1h-1z"/>
</g>
<g shape-rendering="crispEdges">
<rect x="519" y="1" width="5" height="14" fill="#f6f6f6"/>
<rect x="521" y="5" width="1" height="8" fill="#000"/>
<rect x="521" y="3" width="1" height="2" fill="#ffa000"/>
<rect x="518" y="1" width="1" height="1" fill="#ffa000"/>
<rect x="524" y="1" width="1" height="1" fill="#ffa000"/>
</g>
<path fill="#ffa000" d="M516 17h12l-6 6.5z"/>
<!-- trigger marker big -->
<path fill="#ffa000" d="M21 30.5L27 24h10l1 1v11l-1 1h-10z"/>
<path fill="#000" shape-rendering="crispEdges" d="M28 25h9v2h-9zM31 27h2v9h-2z"/>
<!-- trigger marker small in record view -->
<path fill="#ffa000" d="M122 10.5L127 5h6l1 1v9l-1 1h-6z"/>
<path fill="#000" shape-rendering="crispEdges" d="M127 6h6v1.5h-6zM129 7h2v8h-2z"/>
<!-- channel markers -->
<path fill="#ff20ff" fill-rule="evenodd" d="M0 72L1 71h11.5l8.5 8.5l-8.5 8.5h-11.5l-1 -1zM1 73v13h11l6.5-6.5l-6.5-6.5z"/>
<text x="7.5" y="85" font-size="15" fill="#e000e0" text-anchor="middle">3</text>
<path fill="#00e6e6" d="M0 179L1 178h11.5l8.5 8.5l-8.5 8.5h-11.5l-1 -1z"/>
<text x="7.5" y="192" font-size="15.5" fill="#000" text-anchor="middle" stroke="#000" stroke-width="0.4">2</text>
<path fill="#30e830" fill-rule="evenodd" d="M0 659L1 658h11.5l8.5 8.5l-8.5 8.5h-11.5l-1 -1zM1 660v13h11l6.5-6.5l-6.5-6.5z"/>
<text x="8" y="672" font-size="15" fill="#00c800" text-anchor="middle">4</text>

<!-- top texts -->
<text class="s" x="0" y="15" font-size="20.5" fill="#eef0ff" stroke="#eef0ff" stroke-width="0.45" textLength="31" lengthAdjust="spacingAndGlyphs">Tek</text>
<text x="35.5" y="13" font-size="16" fill="#eef0ff" textLength="31.5" lengthAdjust="spacing">Run</text>
<text x="924.5" y="13" font-size="16" fill="#eef0ff" textLength="40" lengthAdjust="spacing">Trig?</text>

<!-- status boxes -->
<g fill="none" stroke="#d8d8d8" stroke-width="1">
<rect x="20.5" y="670.5" width="554" height="20" rx="6"/>
<rect x="582.5" y="670.5" width="148" height="37" rx="6"/>
<rect x="737.5" y="670.5" width="106" height="37" rx="6"/>
<rect x="851.5" y="670.5" width="170" height="37" rx="6"/>
<rect x="909.5" y="729.5" width="112" height="37" rx="6"/>
</g>
<g stroke-width="0.15">
<rect x="165" y="673" width="25" height="16" rx="9" ry="8" fill="#00e4e4"/>
<text x="177.5" y="686" font-size="15.5" fill="#000" stroke="#000" text-anchor="middle">2</text>
<text x="207" y="686" font-size="16" fill="#00e4e4" stroke="#00e4e4" textLength="54.5" lengthAdjust="spacing">200mV</text>
<text x="268.5" y="686" font-size="15" fill="#00e4e4" stroke="#00e4e4" textLength="12.5" lengthAdjust="spacingAndGlyphs">Ω</text>
<text x="282.5" y="682" font-size="9.5" fill="#00e4e4" textLength="5" lengthAdjust="spacingAndGlyphs">B</text>
<text x="286.5" y="686" font-size="9.5" fill="#00e4e4" textLength="6.5" lengthAdjust="spacingAndGlyphs">W</text>
<rect x="304" y="673" width="25" height="16" rx="9" ry="8" fill="#aa00aa"/>
<text x="316.5" y="686" font-size="15.5" fill="#000" stroke="#000" text-anchor="middle">3</text>
<text x="346" y="686" font-size="16" fill="#b000b0" stroke="#b000b0" textLength="55" lengthAdjust="spacing">200mV</text>
<text x="407.5" y="686" font-size="15" fill="#b000b0" stroke="#b000b0" textLength="12.5" lengthAdjust="spacingAndGlyphs">Ω</text>
<text x="421.5" y="682" font-size="9.5" fill="#b000b0" textLength="5" lengthAdjust="spacingAndGlyphs">B</text>
<text x="425.5" y="686" font-size="9.5" fill="#b000b0" textLength="6.5" lengthAdjust="spacingAndGlyphs">W</text>
<rect x="443" y="673" width="25" height="16" rx="9" ry="8" fill="#00a500"/>
<text x="455.5" y="686" font-size="15.5" fill="#000" stroke="#000" text-anchor="middle">4</text>
<path fill="#00b000" shape-rendering="crispEdges" d="M478 675h1v8h-1zM475 682h7v1h-7zM476 683h5v1h-5zM477 684h3v1h-3zM478 685h1v1h-1z"/>
<text x="486" y="686" font-size="16" fill="#00b000" stroke="#00b000" textLength="53.5" lengthAdjust="spacing">100mV</text>
<text x="547.5" y="686" font-size="15" fill="#00b000" stroke="#00b000" textLength="12.5" lengthAdjust="spacingAndGlyphs">Ω</text>
<text x="560.5" y="682" font-size="9.5" fill="#00b000" textLength="5" lengthAdjust="spacingAndGlyphs">B</text>
<text x="564.5" y="686" font-size="9.5" fill="#00b000" textLength="6.5" lengthAdjust="spacingAndGlyphs">W</text>

<text x="588" y="686" font-size="16" fill="#f0f0f0" stroke="#f0f0f0" textLength="55" lengthAdjust="spacing">2.00μs</text>
<rect x="587" y="691.5" width="12" height="12" rx="2" fill="#ffa000"/>
<path fill="#000" shape-rendering="crispEdges" d="M589 693h8v2h-8zM592 695h2v7h-2z"/>
<path fill="none" stroke="#ffa000" stroke-width="1.5" d="M600 697.5h7M604.5 694.5l3 3l-3 3"/>
<path fill="#ffa000" d="M610 693.5h11l-5.5 7z"/>
<text x="622.5" y="703" font-size="16" fill="#ffa000" stroke="#ffa000" textLength="97" lengthAdjust="spacing">1.806000ms</text>

<text x="742.5" y="685.5" font-size="16" fill="#f0f0f0" stroke="#f0f0f0" textLength="72" lengthAdjust="spacingAndGlyphs">2.50GS/s</text>
<text x="742.5" y="703" font-size="16" fill="#f0f0f0" stroke="#f0f0f0" textLength="81" lengthAdjust="spacing">5M points</text>

<rect x="882" y="673" width="25" height="16" rx="9" ry="8" fill="#ffff00"/>
<text x="894.5" y="686" font-size="15" fill="#000" stroke="#000" text-anchor="middle">1</text>
<path fill="none" stroke="#f4f4f4" stroke-width="1.8" d="M920 685h5l3-9h4"/>
<text x="965.5" y="686" font-size="16" fill="#f0f0f0" stroke="#f0f0f0" textLength="50.5" lengthAdjust="spacing">2.10 V</text>
</g>

<!-- buttons -->
<g shape-rendering="crispEdges">
<rect x="20" y="714" width="114" height="54" rx="3" fill="#6e6e6e"/><rect x="21" y="715" width="112" height="51" rx="2.5" fill="#555653"/><rect x="23" y="714" width="108" height="1" fill="#8a8a8a"/>
<rect x="138" y="714" width="114" height="54" rx="3" fill="#6e6e6e"/><rect x="139" y="715" width="112" height="51" rx="2.5" fill="#555653"/><rect x="141" y="714" width="108" height="1" fill="#8a8a8a"/>
<rect x="256" y="714" width="114" height="54" rx="3" fill="#6e6e6e"/><rect x="257" y="715" width="112" height="51" rx="2.5" fill="#555653"/><rect x="259" y="714" width="108" height="1" fill="#8a8a8a"/>
<rect x="374" y="714" width="114" height="54" rx="3" fill="#6e6e6e"/><rect x="375" y="715" width="112" height="51" rx="2.5" fill="#555653"/><rect x="377" y="714" width="108" height="1" fill="#8a8a8a"/>
<rect x="492" y="714" width="114" height="54" rx="3" fill="#6e6e6e"/><rect x="493" y="715" width="112" height="51" rx="2.5" fill="#555653"/><rect x="495" y="714" width="108" height="1" fill="#8a8a8a"/>
<rect x="610" y="714" width="114" height="54" rx="3" fill="#6e6e6e"/><rect x="611" y="715" width="112" height="51" rx="2.5" fill="#555653"/><rect x="613" y="714" width="108" height="1" fill="#8a8a8a"/>
<rect x="728" y="714" width="114" height="54" rx="3" fill="#6e6e6e"/><rect x="729" y="715" width="112" height="51" rx="2.5" fill="#555653"/><rect x="731" y="714" width="108" height="1" fill="#8a8a8a"/>
</g>
<g fill="#f0f0f0" stroke="#f0f0f0" stroke-width="0.12" font-size="16">
<text x="59" y="738" textLength="36" lengthAdjust="spacing">Save</text>
<text x="24" y="755" textLength="106" lengthAdjust="spacing">Screen Image</text>
<text x="177" y="738" textLength="36" lengthAdjust="spacing">Save</text>
<text x="155.5" y="755" textLength="80" lengthAdjust="spacing">Waveform</text>
<text x="295" y="738" textLength="36" lengthAdjust="spacing">Save</text>
<text x="290" y="755" textLength="47" lengthAdjust="spacing">Setup</text>
<text x="410" y="738" textLength="44.5" lengthAdjust="spacing">Recall</text>
<text x="391.5" y="755" textLength="79.5" lengthAdjust="spacing">Waveform</text>
<text x="527.5" y="738" textLength="44.5" lengthAdjust="spacing">Recall</text>
<text x="526" y="755" textLength="47" lengthAdjust="spacing">Setup</text>
<text x="640.5" y="729" textLength="53.5" lengthAdjust="spacing">Assign</text>
<text x="679.5" y="746" textLength="16" lengthAdjust="spacing">to</text>
<text x="771.5" y="738" textLength="28" lengthAdjust="spacing">File</text>
<text x="754.5" y="755" textLength="62.5" lengthAdjust="spacing">Utilities</text>
</g>
<path fill="#8e8e8e" d="M647 735h27v14h-27a7 7 0 0 1 0 -14z"/><path fill="#fafafa" d="M646 733h27v13.5h-27a6.75 6.75 0 0 1 0 -13.5z"/><rect x="671" y="734" width="2" height="12" fill="#c8c8c8"/>
<text x="642.5" y="744.5" font-size="12" font-weight="bold" fill="#000" textLength="26" lengthAdjust="spacingAndGlyphs">Save</text>
<rect x="641" y="750" width="52" height="16" fill="#0070ff"/>
<text x="644" y="763" font-size="16" fill="#fff" stroke="#fff" stroke-width="0.3" textLength="46" lengthAdjust="spacing">Image</text>

<g fill="#f0f0f0" stroke="#f0f0f0" stroke-width="0.12" font-size="16">
<text x="924.5" y="746" textLength="42" lengthAdjust="spacing">3 Oct</text><text x="978" y="746" textLength="39" lengthAdjust="spacing">2023</text>
<text x="915" y="761.5" textLength="70.5" lengthAdjust="spacingAndGlyphs">08:07:47</text>
</g>
</svg>
</body></html>
